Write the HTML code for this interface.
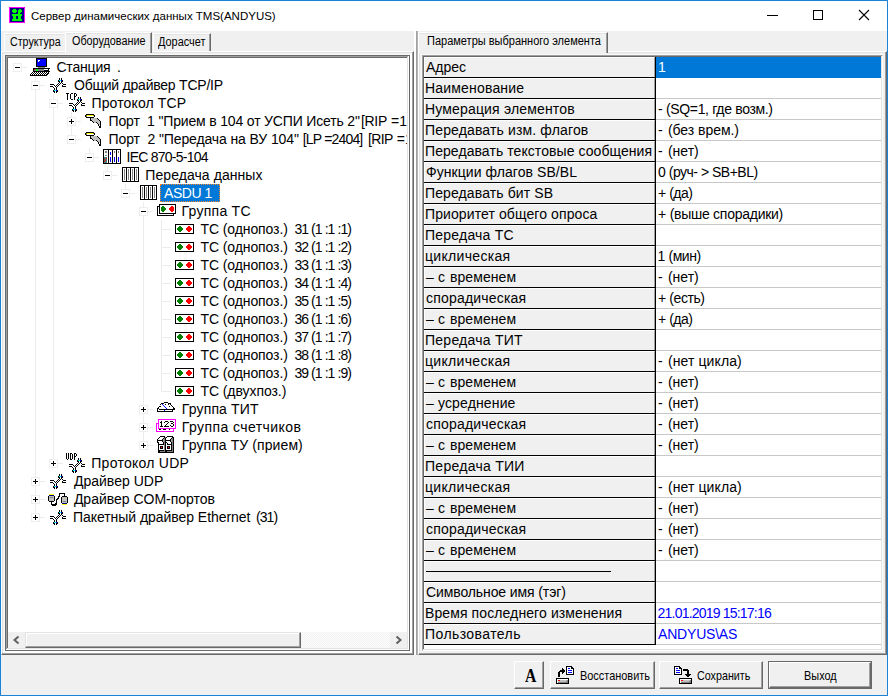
<!DOCTYPE html><html><head><meta charset="utf-8"><style>
html,body{margin:0;padding:0;width:888px;height:696px;overflow:hidden;background:#f0f0f0}
body{position:relative;font-family:"Liberation Sans",sans-serif}
div{box-sizing:border-box}
.t{position:absolute;white-space:pre;font-family:"Liberation Sans",sans-serif}
svg{position:absolute;overflow:visible}
</style></head><body>
<div style="position:absolute;left:0px;top:0px;width:888px;height:696px;background:#f0f0f0;"></div>
<div style="position:absolute;left:1px;top:1px;width:886px;height:30px;background:#ffffff;"></div>
<div style="position:absolute;left:0px;top:0px;width:888px;height:1px;background:#1883d7;"></div>
<div style="position:absolute;left:0px;top:695px;width:888px;height:1px;background:#1883d7;"></div>
<div style="position:absolute;left:0px;top:0px;width:1px;height:696px;background:#1883d7;"></div>
<div style="position:absolute;left:887px;top:0px;width:1px;height:696px;background:#1883d7;"></div>
<svg style="left:9px;top:7px" width="16" height="16" shape-rendering="crispEdges"><rect x="0" y="0" width="16" height="1" fill="#ff00ff"/><rect x="0" y="1" width="1" height="1" fill="#ff00ff"/><rect x="1" y="1" width="14" height="1" fill="#000080"/><rect x="15" y="1" width="1" height="1" fill="#ff00ff"/><rect x="0" y="2" width="1" height="1" fill="#ff00ff"/><rect x="1" y="2" width="3" height="1" fill="#000080"/><rect x="4" y="2" width="3" height="1" fill="#00ff00"/><rect x="7" y="2" width="3" height="1" fill="#000080"/><rect x="10" y="2" width="2" height="1" fill="#00ff00"/><rect x="12" y="2" width="3" height="1" fill="#000080"/><rect x="15" y="2" width="1" height="1" fill="#ff00ff"/><rect x="0" y="3" width="1" height="1" fill="#ff00ff"/><rect x="1" y="3" width="2" height="1" fill="#000080"/><rect x="3" y="3" width="5" height="1" fill="#00ff00"/><rect x="8" y="3" width="1" height="1" fill="#000080"/><rect x="9" y="3" width="4" height="1" fill="#00ff00"/><rect x="13" y="3" width="2" height="1" fill="#000080"/><rect x="15" y="3" width="1" height="1" fill="#ff00ff"/><rect x="0" y="4" width="1" height="1" fill="#ff00ff"/><rect x="1" y="4" width="2" height="1" fill="#000080"/><rect x="3" y="4" width="5" height="1" fill="#00ff00"/><rect x="8" y="4" width="1" height="1" fill="#000080"/><rect x="9" y="4" width="4" height="1" fill="#00ff00"/><rect x="13" y="4" width="2" height="1" fill="#000080"/><rect x="15" y="4" width="1" height="1" fill="#ff00ff"/><rect x="0" y="5" width="1" height="1" fill="#ff00ff"/><rect x="1" y="5" width="3" height="1" fill="#000080"/><rect x="4" y="5" width="3" height="1" fill="#00ff00"/><rect x="7" y="5" width="2" height="1" fill="#000080"/><rect x="9" y="5" width="3" height="1" fill="#00ff00"/><rect x="12" y="5" width="3" height="1" fill="#000080"/><rect x="15" y="5" width="1" height="1" fill="#ff00ff"/><rect x="0" y="6" width="1" height="1" fill="#ff00ff"/><rect x="1" y="6" width="8" height="1" fill="#000080"/><rect x="9" y="6" width="2" height="1" fill="#00ff00"/><rect x="11" y="6" width="4" height="1" fill="#000080"/><rect x="15" y="6" width="1" height="1" fill="#ff00ff"/><rect x="0" y="7" width="1" height="1" fill="#ff00ff"/><rect x="1" y="7" width="2" height="1" fill="#000080"/><rect x="3" y="7" width="10" height="1" fill="#00ff00"/><rect x="13" y="7" width="2" height="1" fill="#000080"/><rect x="15" y="7" width="1" height="1" fill="#ff00ff"/><rect x="0" y="8" width="1" height="1" fill="#ff00ff"/><rect x="1" y="8" width="2" height="1" fill="#000080"/><rect x="3" y="8" width="10" height="1" fill="#00ff00"/><rect x="13" y="8" width="2" height="1" fill="#000080"/><rect x="15" y="8" width="1" height="1" fill="#ff00ff"/><rect x="0" y="9" width="1" height="1" fill="#ff00ff"/><rect x="1" y="9" width="3" height="1" fill="#000080"/><rect x="4" y="9" width="3" height="1" fill="#00ff00"/><rect x="7" y="9" width="2" height="1" fill="#000080"/><rect x="9" y="9" width="3" height="1" fill="#00ff00"/><rect x="12" y="9" width="3" height="1" fill="#000080"/><rect x="15" y="9" width="1" height="1" fill="#ff00ff"/><rect x="0" y="10" width="1" height="1" fill="#ff00ff"/><rect x="1" y="10" width="3" height="1" fill="#000080"/><rect x="4" y="10" width="3" height="1" fill="#00ff00"/><rect x="7" y="10" width="2" height="1" fill="#000080"/><rect x="9" y="10" width="3" height="1" fill="#00ff00"/><rect x="12" y="10" width="3" height="1" fill="#000080"/><rect x="15" y="10" width="1" height="1" fill="#ff00ff"/><rect x="0" y="11" width="1" height="1" fill="#ff00ff"/><rect x="1" y="11" width="3" height="1" fill="#000080"/><rect x="4" y="11" width="3" height="1" fill="#00ff00"/><rect x="7" y="11" width="2" height="1" fill="#000080"/><rect x="9" y="11" width="3" height="1" fill="#00ff00"/><rect x="12" y="11" width="3" height="1" fill="#000080"/><rect x="15" y="11" width="1" height="1" fill="#ff00ff"/><rect x="0" y="12" width="1" height="1" fill="#ff00ff"/><rect x="1" y="12" width="2" height="1" fill="#000080"/><rect x="3" y="12" width="10" height="1" fill="#00ff00"/><rect x="13" y="12" width="2" height="1" fill="#000080"/><rect x="15" y="12" width="1" height="1" fill="#ff00ff"/><rect x="0" y="13" width="1" height="1" fill="#ff00ff"/><rect x="1" y="13" width="2" height="1" fill="#000080"/><rect x="3" y="13" width="10" height="1" fill="#00ff00"/><rect x="13" y="13" width="2" height="1" fill="#000080"/><rect x="15" y="13" width="1" height="1" fill="#ff00ff"/><rect x="0" y="14" width="1" height="1" fill="#ff00ff"/><rect x="1" y="14" width="14" height="1" fill="#000080"/><rect x="15" y="14" width="1" height="1" fill="#ff00ff"/><rect x="0" y="15" width="16" height="1" fill="#ff00ff"/></svg>
<div class="t" style="left:31px;top:7.7px;font-size:11.5px;line-height:16px;letter-spacing:0px;color:#000;">Сервер динамических данных TMS(ANDYUS)</div>
<div style="position:absolute;left:767px;top:15px;width:11px;height:1px;background:#000;"></div>
<div style="position:absolute;left:813px;top:10px;width:10px;height:10px;border:1px solid #000"></div>
<svg style="left:858px;top:9px" width="12" height="12"><path d="M1 1 L11 11 M11 1 L1 11" stroke="#000" stroke-width="1.1"/></svg>
<div style="position:absolute;left:4px;top:33px;width:61px;height:19px;background:#f0f0f0;border-top:1px solid #fff;border-left:1px solid #fff;"></div>
<div style="position:absolute;left:5px;top:34px;width:59px;height:1px;background:#e3e3e3;"></div>
<div class="t" style="left:9.5px;top:35px;font-size:12px;line-height:14px;letter-spacing:0px;color:#000;transform:scaleX(0.89);transform-origin:0 0;">Структура</div>
<div style="position:absolute;left:153px;top:33px;width:58px;height:19px;background:#f0f0f0;border-top:1px solid #fff;border-left:1px solid #fff;border-right:1px solid #696969;"></div>
<div style="position:absolute;left:154px;top:34px;width:55px;height:1px;background:#e3e3e3;"></div>
<div style="position:absolute;left:209px;top:34px;width:1px;height:18px;background:#a0a0a0;"></div>
<div class="t" style="left:157.5px;top:35px;font-size:12px;line-height:14px;letter-spacing:0px;color:#000;transform:scaleX(0.91);transform-origin:0 0;">Дорасчет</div>
<div style="position:absolute;left:1px;top:51px;width:413px;height:604px;background:#f0f0f0;border-top:1px solid #fff;border-left:1px solid #fff;border-right:1px solid #696969;border-bottom:1px solid #696969;"></div>
<div style="position:absolute;left:2px;top:52px;width:411px;height:1px;background:#e3e3e3;"></div>
<div style="position:absolute;left:2px;top:52px;width:1px;height:602px;background:#e3e3e3;"></div>
<div style="position:absolute;left:412px;top:52px;width:1px;height:602px;background:#a0a0a0;"></div>
<div style="position:absolute;left:2px;top:653px;width:411px;height:1px;background:#a0a0a0;"></div>
<div style="position:absolute;left:4px;top:54px;width:406px;height:1px;background:#f8f8f8;"></div>
<div style="position:absolute;left:4px;top:54px;width:1px;height:597px;background:#f8f8f8;"></div>
<div style="position:absolute;left:410px;top:53px;width:2px;height:600px;background:#ffffff;"></div>
<div style="position:absolute;left:3px;top:651px;width:409px;height:2px;background:#ffffff;"></div>
<div style="position:absolute;left:65px;top:32px;width:87px;height:21px;background:#f0f0f0;border-top:1px solid #fff;border-left:1px solid #fff;border-right:1px solid #696969;"></div>
<div style="position:absolute;left:66px;top:33px;width:85px;height:1px;background:#e3e3e3;"></div>
<div style="position:absolute;left:150px;top:33px;width:1px;height:20px;background:#a0a0a0;"></div>
<div class="t" style="left:72px;top:34px;font-size:12px;line-height:14px;letter-spacing:0px;color:#000;transform:scaleX(0.9);transform-origin:0 0;">Оборудование</div>
<div style="position:absolute;left:66px;top:51px;width:84px;height:3px;background:#f0f0f0;"></div>
<div style="position:absolute;left:5px;top:55px;width:405px;height:596px;background:#ffffff;border:1px solid #696969;"></div>
<div style="position:absolute;left:6px;top:56px;width:403px;height:1px;background:#a0a0a0;"></div>
<div style="position:absolute;left:6px;top:56px;width:1px;height:594px;background:#a0a0a0;"></div>
<div style="position:absolute;left:7px;top:57px;width:401px;height:1px;background:#696969;"></div>
<div style="position:absolute;left:7px;top:57px;width:1px;height:592px;background:#696969;"></div>
<div style="position:absolute;left:407px;top:57px;width:1px;height:592px;background:#e3e3e3;"></div>
<div style="position:absolute;left:7px;top:648px;width:401px;height:1px;background:#e3e3e3;"></div>
<div style="position:absolute;left:408px;top:56px;width:1px;height:594px;background:#ffffff;"></div>
<div style="position:absolute;left:6px;top:649px;width:403px;height:1px;background:#ffffff;"></div>
<div style="position:absolute;left:8px;top:58px;width:399px;height:574px;overflow:hidden">
<div style="position:absolute;left:27px;top:18px;width:1px;height:442px;background:#ececec;"></div>
<div style="position:absolute;left:45px;top:36px;width:1px;height:370px;background:#ececec;"></div>
<div style="position:absolute;left:63px;top:54px;width:1px;height:28px;background:#ececec;"></div>
<div style="position:absolute;left:81px;top:90px;width:1px;height:10px;background:#ececec;"></div>
<div style="position:absolute;left:99px;top:108px;width:1px;height:10px;background:#ececec;"></div>
<div style="position:absolute;left:117px;top:126px;width:1px;height:10px;background:#ececec;"></div>
<div style="position:absolute;left:135px;top:144px;width:1px;height:244px;background:#ececec;"></div>
<div style="position:absolute;left:153px;top:162px;width:1px;height:172px;background:#ececec;"></div>
<div style="position:absolute;left:9px;top:9px;width:10px;height:1px;background:#ececec;"></div>
<div style="position:absolute;left:27px;top:27px;width:10px;height:1px;background:#ececec;"></div>
<div style="position:absolute;left:45px;top:45px;width:10px;height:1px;background:#ececec;"></div>
<div style="position:absolute;left:63px;top:63px;width:10px;height:1px;background:#ececec;"></div>
<div style="position:absolute;left:63px;top:81px;width:10px;height:1px;background:#ececec;"></div>
<div style="position:absolute;left:81px;top:99px;width:10px;height:1px;background:#ececec;"></div>
<div style="position:absolute;left:99px;top:117px;width:10px;height:1px;background:#ececec;"></div>
<div style="position:absolute;left:117px;top:135px;width:10px;height:1px;background:#ececec;"></div>
<div style="position:absolute;left:135px;top:153px;width:10px;height:1px;background:#ececec;"></div>
<div style="position:absolute;left:153px;top:171px;width:10px;height:1px;background:#ececec;"></div>
<div style="position:absolute;left:153px;top:189px;width:10px;height:1px;background:#ececec;"></div>
<div style="position:absolute;left:153px;top:207px;width:10px;height:1px;background:#ececec;"></div>
<div style="position:absolute;left:153px;top:225px;width:10px;height:1px;background:#ececec;"></div>
<div style="position:absolute;left:153px;top:243px;width:10px;height:1px;background:#ececec;"></div>
<div style="position:absolute;left:153px;top:261px;width:10px;height:1px;background:#ececec;"></div>
<div style="position:absolute;left:153px;top:279px;width:10px;height:1px;background:#ececec;"></div>
<div style="position:absolute;left:153px;top:297px;width:10px;height:1px;background:#ececec;"></div>
<div style="position:absolute;left:153px;top:315px;width:10px;height:1px;background:#ececec;"></div>
<div style="position:absolute;left:153px;top:333px;width:10px;height:1px;background:#ececec;"></div>
<div style="position:absolute;left:135px;top:351px;width:10px;height:1px;background:#ececec;"></div>
<div style="position:absolute;left:135px;top:369px;width:10px;height:1px;background:#ececec;"></div>
<div style="position:absolute;left:135px;top:387px;width:10px;height:1px;background:#ececec;"></div>
<div style="position:absolute;left:45px;top:405px;width:10px;height:1px;background:#ececec;"></div>
<div style="position:absolute;left:27px;top:423px;width:10px;height:1px;background:#ececec;"></div>
<div style="position:absolute;left:27px;top:441px;width:10px;height:1px;background:#ececec;"></div>
<div style="position:absolute;left:27px;top:459px;width:10px;height:1px;background:#ececec;"></div>
<div style="position:absolute;left:5px;top:5px;width:9px;height:9px;background:#ffffff;border:1px solid #eeeeee;"></div>
<div style="position:absolute;left:7px;top:9px;width:5px;height:1px;background:#000;"></div>
<div style="position:absolute;left:23px;top:23px;width:9px;height:9px;background:#ffffff;border:1px solid #eeeeee;"></div>
<div style="position:absolute;left:25px;top:27px;width:5px;height:1px;background:#000;"></div>
<div style="position:absolute;left:41px;top:41px;width:9px;height:9px;background:#ffffff;border:1px solid #eeeeee;"></div>
<div style="position:absolute;left:43px;top:45px;width:5px;height:1px;background:#000;"></div>
<div style="position:absolute;left:59px;top:59px;width:9px;height:9px;background:#ffffff;border:1px solid #eeeeee;"></div>
<div style="position:absolute;left:61px;top:63px;width:5px;height:1px;background:#000;"></div>
<div style="position:absolute;left:63px;top:61px;width:1px;height:5px;background:#000;"></div>
<div style="position:absolute;left:59px;top:77px;width:9px;height:9px;background:#ffffff;border:1px solid #eeeeee;"></div>
<div style="position:absolute;left:61px;top:81px;width:5px;height:1px;background:#000;"></div>
<div style="position:absolute;left:77px;top:95px;width:9px;height:9px;background:#ffffff;border:1px solid #eeeeee;"></div>
<div style="position:absolute;left:79px;top:99px;width:5px;height:1px;background:#000;"></div>
<div style="position:absolute;left:95px;top:113px;width:9px;height:9px;background:#ffffff;border:1px solid #eeeeee;"></div>
<div style="position:absolute;left:97px;top:117px;width:5px;height:1px;background:#000;"></div>
<div style="position:absolute;left:113px;top:131px;width:9px;height:9px;background:#ffffff;border:1px solid #eeeeee;"></div>
<div style="position:absolute;left:115px;top:135px;width:5px;height:1px;background:#000;"></div>
<div style="position:absolute;left:131px;top:149px;width:9px;height:9px;background:#ffffff;border:1px solid #eeeeee;"></div>
<div style="position:absolute;left:133px;top:153px;width:5px;height:1px;background:#000;"></div>
<div style="position:absolute;left:131px;top:347px;width:9px;height:9px;background:#ffffff;border:1px solid #eeeeee;"></div>
<div style="position:absolute;left:133px;top:351px;width:5px;height:1px;background:#000;"></div>
<div style="position:absolute;left:135px;top:349px;width:1px;height:5px;background:#000;"></div>
<div style="position:absolute;left:131px;top:365px;width:9px;height:9px;background:#ffffff;border:1px solid #eeeeee;"></div>
<div style="position:absolute;left:133px;top:369px;width:5px;height:1px;background:#000;"></div>
<div style="position:absolute;left:135px;top:367px;width:1px;height:5px;background:#000;"></div>
<div style="position:absolute;left:131px;top:383px;width:9px;height:9px;background:#ffffff;border:1px solid #eeeeee;"></div>
<div style="position:absolute;left:133px;top:387px;width:5px;height:1px;background:#000;"></div>
<div style="position:absolute;left:135px;top:385px;width:1px;height:5px;background:#000;"></div>
<div style="position:absolute;left:41px;top:401px;width:9px;height:9px;background:#ffffff;border:1px solid #eeeeee;"></div>
<div style="position:absolute;left:43px;top:405px;width:5px;height:1px;background:#000;"></div>
<div style="position:absolute;left:45px;top:403px;width:1px;height:5px;background:#000;"></div>
<div style="position:absolute;left:23px;top:419px;width:9px;height:9px;background:#ffffff;border:1px solid #eeeeee;"></div>
<div style="position:absolute;left:25px;top:423px;width:5px;height:1px;background:#000;"></div>
<div style="position:absolute;left:27px;top:421px;width:1px;height:5px;background:#000;"></div>
<div style="position:absolute;left:23px;top:437px;width:9px;height:9px;background:#ffffff;border:1px solid #eeeeee;"></div>
<div style="position:absolute;left:25px;top:441px;width:5px;height:1px;background:#000;"></div>
<div style="position:absolute;left:27px;top:439px;width:1px;height:5px;background:#000;"></div>
<div style="position:absolute;left:23px;top:455px;width:9px;height:9px;background:#ffffff;border:1px solid #eeeeee;"></div>
<div style="position:absolute;left:25px;top:459px;width:5px;height:1px;background:#000;"></div>
<div style="position:absolute;left:27px;top:457px;width:1px;height:5px;background:#000;"></div>
<svg style="left:22px;top:0px" width="20" height="18" shape-rendering="crispEdges"><rect x="6" y="0" width="11" height="1" fill="#000000"/><rect x="6" y="1" width="1" height="1" fill="#000000"/><rect x="7" y="1" width="9" height="1" fill="#0000ff"/><rect x="16" y="1" width="1" height="1" fill="#000000"/><rect x="6" y="2" width="1" height="1" fill="#000000"/><rect x="7" y="2" width="1" height="1" fill="#0000ff"/><rect x="8" y="2" width="2" height="1" fill="#ffffff"/><rect x="10" y="2" width="6" height="1" fill="#0000ff"/><rect x="16" y="2" width="1" height="1" fill="#000000"/><rect x="6" y="3" width="1" height="1" fill="#000000"/><rect x="7" y="3" width="1" height="1" fill="#0000ff"/><rect x="8" y="3" width="1" height="1" fill="#ffffff"/><rect x="9" y="3" width="7" height="1" fill="#0000ff"/><rect x="16" y="3" width="1" height="1" fill="#000000"/><rect x="6" y="4" width="1" height="1" fill="#000000"/><rect x="7" y="4" width="9" height="1" fill="#0000ff"/><rect x="16" y="4" width="1" height="1" fill="#000000"/><rect x="6" y="5" width="1" height="1" fill="#000000"/><rect x="7" y="5" width="9" height="1" fill="#0000ff"/><rect x="16" y="5" width="1" height="1" fill="#000000"/><rect x="6" y="6" width="1" height="1" fill="#000000"/><rect x="7" y="6" width="9" height="1" fill="#0000ff"/><rect x="16" y="6" width="1" height="1" fill="#000000"/><rect x="6" y="7" width="1" height="1" fill="#000000"/><rect x="7" y="7" width="9" height="1" fill="#0000ff"/><rect x="16" y="7" width="1" height="1" fill="#000000"/><rect x="6" y="8" width="11" height="1" fill="#000000"/><rect x="8" y="9" width="7" height="1" fill="#808080"/><rect x="3" y="10" width="17" height="1" fill="#000000"/><rect x="3" y="11" width="1" height="1" fill="#000000"/><rect x="4" y="11" width="1" height="1" fill="#ff0000"/><rect x="5" y="11" width="1" height="1" fill="#808080"/><rect x="6" y="11" width="2" height="1" fill="#00ff00"/><rect x="8" y="11" width="6" height="1" fill="#808080"/><rect x="14" y="11" width="4" height="1" fill="#ffffff"/><rect x="18" y="11" width="1" height="1" fill="#000000"/><rect x="3" y="12" width="1" height="1" fill="#000000"/><rect x="4" y="12" width="2" height="1" fill="#808080"/><rect x="6" y="12" width="2" height="1" fill="#00ff00"/><rect x="8" y="12" width="6" height="1" fill="#808080"/><rect x="14" y="12" width="5" height="1" fill="#000000"/><rect x="3" y="13" width="17" height="1" fill="#000000"/><rect x="2" y="14" width="1" height="1" fill="#000000"/><rect x="3" y="14" width="1" height="1" fill="#ffffff"/><rect x="4" y="14" width="1" height="1" fill="#000000"/><rect x="5" y="14" width="1" height="1" fill="#ffffff"/><rect x="6" y="14" width="1" height="1" fill="#000000"/><rect x="7" y="14" width="1" height="1" fill="#ffffff"/><rect x="8" y="14" width="1" height="1" fill="#000000"/><rect x="9" y="14" width="1" height="1" fill="#ffffff"/><rect x="10" y="14" width="1" height="1" fill="#000000"/><rect x="11" y="14" width="1" height="1" fill="#ffffff"/><rect x="12" y="14" width="1" height="1" fill="#000000"/><rect x="13" y="14" width="1" height="1" fill="#ffffff"/><rect x="14" y="14" width="1" height="1" fill="#000000"/><rect x="15" y="14" width="1" height="1" fill="#ffffff"/><rect x="16" y="14" width="1" height="1" fill="#000000"/><rect x="17" y="14" width="1" height="1" fill="#ffffff"/><rect x="18" y="14" width="1" height="1" fill="#000000"/><rect x="1" y="15" width="1" height="1" fill="#000000"/><rect x="2" y="15" width="1" height="1" fill="#ffffff"/><rect x="3" y="15" width="1" height="1" fill="#000000"/><rect x="4" y="15" width="1" height="1" fill="#ffffff"/><rect x="5" y="15" width="1" height="1" fill="#000000"/><rect x="6" y="15" width="1" height="1" fill="#ffffff"/><rect x="7" y="15" width="1" height="1" fill="#000000"/><rect x="8" y="15" width="1" height="1" fill="#ffffff"/><rect x="9" y="15" width="1" height="1" fill="#000000"/><rect x="10" y="15" width="1" height="1" fill="#ffffff"/><rect x="11" y="15" width="1" height="1" fill="#000000"/><rect x="12" y="15" width="1" height="1" fill="#ffffff"/><rect x="13" y="15" width="1" height="1" fill="#000000"/><rect x="14" y="15" width="1" height="1" fill="#ffffff"/><rect x="15" y="15" width="1" height="1" fill="#000000"/><rect x="16" y="15" width="1" height="1" fill="#ffffff"/><rect x="17" y="15" width="2" height="1" fill="#000000"/><rect x="0" y="16" width="1" height="1" fill="#000000"/><rect x="1" y="16" width="1" height="1" fill="#ffffff"/><rect x="2" y="16" width="1" height="1" fill="#000000"/><rect x="3" y="16" width="1" height="1" fill="#ffffff"/><rect x="4" y="16" width="1" height="1" fill="#000000"/><rect x="5" y="16" width="1" height="1" fill="#ffffff"/><rect x="6" y="16" width="1" height="1" fill="#000000"/><rect x="7" y="16" width="1" height="1" fill="#ffffff"/><rect x="8" y="16" width="1" height="1" fill="#000000"/><rect x="9" y="16" width="1" height="1" fill="#ffffff"/><rect x="10" y="16" width="1" height="1" fill="#000000"/><rect x="11" y="16" width="1" height="1" fill="#ffffff"/><rect x="12" y="16" width="1" height="1" fill="#000000"/><rect x="13" y="16" width="1" height="1" fill="#ffffff"/><rect x="14" y="16" width="1" height="1" fill="#000000"/><rect x="15" y="16" width="1" height="1" fill="#ffffff"/><rect x="16" y="16" width="2" height="1" fill="#000000"/><rect x="0" y="17" width="17" height="1" fill="#000000"/></svg>
<div class="t" style="left:48.400000000000006px;top:0px;font-size:14px;line-height:18px;letter-spacing:-0.18px;color:#000;">Станция</div>
<div class="t" style="left:109.0px;top:0px;font-size:14px;line-height:18px;letter-spacing:0.0px;color:#000;">.</div>
<svg style="left:42px;top:20px" width="16" height="15" shape-rendering="crispEdges"><rect x="9" y="0" width="1" height="1" fill="#000000"/><rect x="11" y="0" width="1" height="1" fill="#000000"/><rect x="9" y="1" width="1" height="1" fill="#000000"/><rect x="11" y="1" width="1" height="1" fill="#000000"/><rect x="8" y="2" width="1" height="1" fill="#000000"/><rect x="9" y="2" width="2" height="1" fill="#00ffff"/><rect x="11" y="2" width="1" height="1" fill="#0000ff"/><rect x="12" y="2" width="1" height="1" fill="#000000"/><rect x="8" y="3" width="2" height="1" fill="#000000"/><rect x="11" y="3" width="2" height="1" fill="#000000"/><rect x="9" y="4" width="1" height="1" fill="#000000"/><rect x="11" y="4" width="1" height="1" fill="#000000"/><rect x="8" y="5" width="1" height="1" fill="#000000"/><rect x="10" y="5" width="1" height="1" fill="#000000"/><rect x="12" y="5" width="1" height="1" fill="#000000"/><rect x="0" y="6" width="4" height="1" fill="#000000"/><rect x="7" y="6" width="1" height="1" fill="#000000"/><rect x="9" y="6" width="1" height="1" fill="#000000"/><rect x="13" y="6" width="3" height="1" fill="#000000"/><rect x="4" y="7" width="1" height="1" fill="#000000"/><rect x="6" y="7" width="1" height="1" fill="#000000"/><rect x="8" y="7" width="1" height="1" fill="#000000"/><rect x="12" y="7" width="1" height="1" fill="#000000"/><rect x="0" y="8" width="3" height="1" fill="#000000"/><rect x="5" y="8" width="1" height="1" fill="#000000"/><rect x="7" y="8" width="1" height="1" fill="#000000"/><rect x="12" y="8" width="4" height="1" fill="#000000"/><rect x="3" y="9" width="1" height="1" fill="#000000"/><rect x="6" y="9" width="1" height="1" fill="#000000"/><rect x="4" y="10" width="1" height="1" fill="#000000"/><rect x="6" y="10" width="1" height="1" fill="#000000"/><rect x="4" y="11" width="1" height="1" fill="#000000"/><rect x="6" y="11" width="1" height="1" fill="#000000"/><rect x="3" y="12" width="1" height="1" fill="#000000"/><rect x="4" y="12" width="2" height="1" fill="#00ffff"/><rect x="6" y="12" width="1" height="1" fill="#0000ff"/><rect x="7" y="12" width="1" height="1" fill="#000000"/><rect x="3" y="13" width="2" height="1" fill="#000000"/><rect x="6" y="13" width="2" height="1" fill="#000000"/><rect x="4" y="14" width="1" height="1" fill="#000000"/><rect x="6" y="14" width="1" height="1" fill="#000000"/></svg>
<div class="t" style="left:66.0px;top:18px;font-size:14px;line-height:18px;letter-spacing:-0.227px;color:#000;">Общий драйвер TCP/IP</div>
<svg style="left:58px;top:35px" width="11" height="7" shape-rendering="crispEdges"><rect x="0" y="0" width="3" height="1" fill="#000000"/><rect x="5" y="0" width="2" height="1" fill="#000000"/><rect x="8" y="0" width="2" height="1" fill="#000000"/><rect x="1" y="1" width="1" height="1" fill="#000000"/><rect x="4" y="1" width="1" height="1" fill="#000000"/><rect x="8" y="1" width="1" height="1" fill="#000000"/><rect x="10" y="1" width="1" height="1" fill="#000000"/><rect x="1" y="2" width="1" height="1" fill="#000000"/><rect x="4" y="2" width="1" height="1" fill="#000000"/><rect x="8" y="2" width="1" height="1" fill="#000000"/><rect x="10" y="2" width="1" height="1" fill="#000000"/><rect x="1" y="3" width="1" height="1" fill="#000000"/><rect x="4" y="3" width="1" height="1" fill="#000000"/><rect x="8" y="3" width="2" height="1" fill="#000000"/><rect x="1" y="4" width="1" height="1" fill="#000000"/><rect x="4" y="4" width="1" height="1" fill="#000000"/><rect x="8" y="4" width="1" height="1" fill="#000000"/><rect x="1" y="5" width="1" height="1" fill="#000000"/><rect x="4" y="5" width="1" height="1" fill="#000000"/><rect x="8" y="5" width="1" height="1" fill="#000000"/><rect x="1" y="6" width="1" height="1" fill="#000000"/><rect x="5" y="6" width="2" height="1" fill="#000000"/><rect x="8" y="6" width="1" height="1" fill="#000000"/></svg>
<svg style="left:61px;top:39px" width="16" height="15" shape-rendering="crispEdges"><rect x="9" y="0" width="1" height="1" fill="#000000"/><rect x="11" y="0" width="1" height="1" fill="#000000"/><rect x="9" y="1" width="1" height="1" fill="#000000"/><rect x="11" y="1" width="1" height="1" fill="#000000"/><rect x="8" y="2" width="1" height="1" fill="#000000"/><rect x="9" y="2" width="2" height="1" fill="#00ffff"/><rect x="11" y="2" width="1" height="1" fill="#0000ff"/><rect x="12" y="2" width="1" height="1" fill="#000000"/><rect x="8" y="3" width="2" height="1" fill="#000000"/><rect x="11" y="3" width="2" height="1" fill="#000000"/><rect x="9" y="4" width="1" height="1" fill="#000000"/><rect x="11" y="4" width="1" height="1" fill="#000000"/><rect x="8" y="5" width="1" height="1" fill="#000000"/><rect x="10" y="5" width="1" height="1" fill="#000000"/><rect x="12" y="5" width="1" height="1" fill="#000000"/><rect x="0" y="6" width="4" height="1" fill="#000000"/><rect x="7" y="6" width="1" height="1" fill="#000000"/><rect x="9" y="6" width="1" height="1" fill="#000000"/><rect x="13" y="6" width="3" height="1" fill="#000000"/><rect x="4" y="7" width="1" height="1" fill="#000000"/><rect x="6" y="7" width="1" height="1" fill="#000000"/><rect x="8" y="7" width="1" height="1" fill="#000000"/><rect x="12" y="7" width="1" height="1" fill="#000000"/><rect x="0" y="8" width="3" height="1" fill="#000000"/><rect x="5" y="8" width="1" height="1" fill="#000000"/><rect x="7" y="8" width="1" height="1" fill="#000000"/><rect x="12" y="8" width="4" height="1" fill="#000000"/><rect x="3" y="9" width="1" height="1" fill="#000000"/><rect x="6" y="9" width="1" height="1" fill="#000000"/><rect x="4" y="10" width="1" height="1" fill="#000000"/><rect x="6" y="10" width="1" height="1" fill="#000000"/><rect x="4" y="11" width="1" height="1" fill="#000000"/><rect x="6" y="11" width="1" height="1" fill="#000000"/><rect x="3" y="12" width="1" height="1" fill="#000000"/><rect x="4" y="12" width="2" height="1" fill="#00ffff"/><rect x="6" y="12" width="1" height="1" fill="#0000ff"/><rect x="7" y="12" width="1" height="1" fill="#000000"/><rect x="3" y="13" width="2" height="1" fill="#000000"/><rect x="6" y="13" width="2" height="1" fill="#000000"/><rect x="4" y="14" width="1" height="1" fill="#000000"/><rect x="6" y="14" width="1" height="1" fill="#000000"/></svg>
<div class="t" style="left:83.5px;top:36px;font-size:14px;line-height:18px;letter-spacing:0.123px;color:#000;">Протокол TCP</div>
<svg style="left:75px;top:54px" width="18" height="16" shape-rendering="crispEdges"><rect x="3" y="2" width="8" height="1" fill="#000000"/><rect x="2" y="3" width="1" height="1" fill="#000000"/><rect x="3" y="3" width="1" height="1" fill="#808000"/><rect x="4" y="3" width="6" height="1" fill="#ffff00"/><rect x="10" y="3" width="1" height="1" fill="#808000"/><rect x="11" y="3" width="1" height="1" fill="#000000"/><rect x="2" y="4" width="1" height="1" fill="#000000"/><rect x="3" y="4" width="1" height="1" fill="#808000"/><rect x="4" y="4" width="7" height="1" fill="#ffffff"/><rect x="11" y="4" width="1" height="1" fill="#000000"/><rect x="3" y="5" width="8" height="1" fill="#000000"/><rect x="7" y="6" width="1" height="1" fill="#000000"/><rect x="8" y="6" width="6" height="1" fill="#c0c0c0"/><rect x="14" y="6" width="1" height="1" fill="#000000"/><rect x="7" y="7" width="1" height="1" fill="#000000"/><rect x="8" y="7" width="7" height="1" fill="#c0c0c0"/><rect x="15" y="7" width="1" height="1" fill="#000000"/><rect x="7" y="8" width="2" height="1" fill="#000000"/><rect x="9" y="8" width="7" height="1" fill="#c0c0c0"/><rect x="16" y="8" width="1" height="1" fill="#000000"/><rect x="9" y="9" width="1" height="1" fill="#000000"/><rect x="10" y="9" width="7" height="1" fill="#c0c0c0"/><rect x="17" y="9" width="1" height="1" fill="#000000"/><rect x="10" y="10" width="1" height="1" fill="#000000"/><rect x="11" y="10" width="2" height="1" fill="#c0c0c0"/><rect x="13" y="10" width="1" height="1" fill="#000000"/><rect x="14" y="10" width="3" height="1" fill="#c0c0c0"/><rect x="17" y="10" width="1" height="1" fill="#000000"/><rect x="14" y="11" width="1" height="1" fill="#000000"/><rect x="15" y="11" width="2" height="1" fill="#c0c0c0"/><rect x="17" y="11" width="1" height="1" fill="#000000"/><rect x="15" y="12" width="1" height="1" fill="#000000"/><rect x="16" y="12" width="1" height="1" fill="#c0c0c0"/><rect x="17" y="12" width="1" height="1" fill="#000000"/><rect x="15" y="13" width="1" height="1" fill="#000000"/><rect x="16" y="13" width="1" height="1" fill="#ffffff"/><rect x="17" y="13" width="1" height="1" fill="#000000"/><rect x="16" y="14" width="2" height="1" fill="#000000"/><rect x="16" y="15" width="2" height="1" fill="#000000"/></svg>
<div class="t" style="left:100.6px;top:54px;font-size:14px;line-height:18px;letter-spacing:-0.166px;color:#000;">Порт  1 &quot;Прием в 104 от УСПИ Исеть 2&quot;</div>
<div class="t" style="left:353.0px;top:54px;font-size:14px;line-height:18px;letter-spacing:-0.333px;color:#000;">[RIP</div>
<div class="t" style="left:383.0px;top:54px;font-size:14px;line-height:18px;letter-spacing:0.0px;color:#000;">=192.168.1.1]</div>
<svg style="left:75px;top:72px" width="18" height="16" shape-rendering="crispEdges"><rect x="3" y="2" width="8" height="1" fill="#000000"/><rect x="2" y="3" width="1" height="1" fill="#000000"/><rect x="3" y="3" width="1" height="1" fill="#808000"/><rect x="4" y="3" width="6" height="1" fill="#ffff00"/><rect x="10" y="3" width="1" height="1" fill="#808000"/><rect x="11" y="3" width="1" height="1" fill="#000000"/><rect x="2" y="4" width="1" height="1" fill="#000000"/><rect x="3" y="4" width="1" height="1" fill="#808000"/><rect x="4" y="4" width="7" height="1" fill="#ffffff"/><rect x="11" y="4" width="1" height="1" fill="#000000"/><rect x="3" y="5" width="8" height="1" fill="#000000"/><rect x="7" y="6" width="1" height="1" fill="#000000"/><rect x="8" y="6" width="6" height="1" fill="#c0c0c0"/><rect x="14" y="6" width="1" height="1" fill="#000000"/><rect x="7" y="7" width="1" height="1" fill="#000000"/><rect x="8" y="7" width="7" height="1" fill="#c0c0c0"/><rect x="15" y="7" width="1" height="1" fill="#000000"/><rect x="7" y="8" width="2" height="1" fill="#000000"/><rect x="9" y="8" width="7" height="1" fill="#c0c0c0"/><rect x="16" y="8" width="1" height="1" fill="#000000"/><rect x="9" y="9" width="1" height="1" fill="#000000"/><rect x="10" y="9" width="7" height="1" fill="#c0c0c0"/><rect x="17" y="9" width="1" height="1" fill="#000000"/><rect x="10" y="10" width="1" height="1" fill="#000000"/><rect x="11" y="10" width="2" height="1" fill="#c0c0c0"/><rect x="13" y="10" width="1" height="1" fill="#000000"/><rect x="14" y="10" width="3" height="1" fill="#c0c0c0"/><rect x="17" y="10" width="1" height="1" fill="#000000"/><rect x="14" y="11" width="1" height="1" fill="#000000"/><rect x="15" y="11" width="2" height="1" fill="#c0c0c0"/><rect x="17" y="11" width="1" height="1" fill="#000000"/><rect x="15" y="12" width="1" height="1" fill="#000000"/><rect x="16" y="12" width="1" height="1" fill="#c0c0c0"/><rect x="17" y="12" width="1" height="1" fill="#000000"/><rect x="15" y="13" width="1" height="1" fill="#000000"/><rect x="16" y="13" width="1" height="1" fill="#ffffff"/><rect x="17" y="13" width="1" height="1" fill="#000000"/><rect x="16" y="14" width="2" height="1" fill="#000000"/><rect x="16" y="15" width="2" height="1" fill="#000000"/></svg>
<div class="t" style="left:100.6px;top:72px;font-size:14px;line-height:18px;letter-spacing:-0.111px;color:#000;">Порт  2 &quot;Передача на ВУ 104&quot;</div>
<div class="t" style="left:294.79999999999995px;top:72px;font-size:14px;line-height:18px;letter-spacing:-0.822px;color:#000;">[LP =2404]</div>
<div class="t" style="left:359.9px;top:72px;font-size:14px;line-height:18px;letter-spacing:-0.568px;color:#000;">[RIP</div>
<div class="t" style="left:388.79999999999995px;top:72px;font-size:14px;line-height:18px;letter-spacing:0.0px;color:#000;">=192.168.1.2]</div>
<svg style="left:95px;top:91px" width="18" height="15" shape-rendering="crispEdges"><rect x="0" y="0" width="18" height="1" fill="#000000"/><rect x="0" y="1" width="1" height="1" fill="#000000"/><rect x="1" y="1" width="4" height="1" fill="#ffffff"/><rect x="5" y="1" width="1" height="1" fill="#000000"/><rect x="6" y="1" width="3" height="1" fill="#ffffff"/><rect x="9" y="1" width="1" height="1" fill="#000000"/><rect x="10" y="1" width="3" height="1" fill="#ffffff"/><rect x="13" y="1" width="1" height="1" fill="#000000"/><rect x="14" y="1" width="3" height="1" fill="#ffffff"/><rect x="17" y="1" width="1" height="1" fill="#000000"/><rect x="0" y="2" width="1" height="1" fill="#000000"/><rect x="1" y="2" width="1" height="1" fill="#ffffff"/><rect x="2" y="2" width="2" height="1" fill="#808080"/><rect x="4" y="2" width="1" height="1" fill="#ffffff"/><rect x="5" y="2" width="1" height="1" fill="#000000"/><rect x="6" y="2" width="3" height="1" fill="#ffffff"/><rect x="9" y="2" width="1" height="1" fill="#000000"/><rect x="10" y="2" width="1" height="1" fill="#ffffff"/><rect x="11" y="2" width="1" height="1" fill="#808080"/><rect x="12" y="2" width="1" height="1" fill="#ffffff"/><rect x="13" y="2" width="1" height="1" fill="#000000"/><rect x="14" y="2" width="1" height="1" fill="#ffffff"/><rect x="15" y="2" width="1" height="1" fill="#808080"/><rect x="16" y="2" width="1" height="1" fill="#ffffff"/><rect x="17" y="2" width="1" height="1" fill="#000000"/><rect x="0" y="3" width="1" height="1" fill="#000000"/><rect x="1" y="3" width="1" height="1" fill="#ffffff"/><rect x="2" y="3" width="2" height="1" fill="#808080"/><rect x="4" y="3" width="1" height="1" fill="#ffffff"/><rect x="5" y="3" width="1" height="1" fill="#000000"/><rect x="6" y="3" width="1" height="1" fill="#ffffff"/><rect x="7" y="3" width="1" height="1" fill="#0000ff"/><rect x="8" y="3" width="1" height="1" fill="#ffffff"/><rect x="9" y="3" width="1" height="1" fill="#000000"/><rect x="10" y="3" width="1" height="1" fill="#ffffff"/><rect x="11" y="3" width="1" height="1" fill="#808080"/><rect x="12" y="3" width="1" height="1" fill="#ffffff"/><rect x="13" y="3" width="1" height="1" fill="#000000"/><rect x="14" y="3" width="1" height="1" fill="#ffffff"/><rect x="15" y="3" width="1" height="1" fill="#808080"/><rect x="16" y="3" width="1" height="1" fill="#ffffff"/><rect x="17" y="3" width="1" height="1" fill="#000000"/><rect x="0" y="4" width="1" height="1" fill="#000000"/><rect x="1" y="4" width="4" height="1" fill="#ffffff"/><rect x="5" y="4" width="1" height="1" fill="#000000"/><rect x="6" y="4" width="1" height="1" fill="#ffffff"/><rect x="7" y="4" width="1" height="1" fill="#0000ff"/><rect x="8" y="4" width="1" height="1" fill="#ffffff"/><rect x="9" y="4" width="1" height="1" fill="#000000"/><rect x="10" y="4" width="3" height="1" fill="#ffffff"/><rect x="13" y="4" width="1" height="1" fill="#000000"/><rect x="14" y="4" width="3" height="1" fill="#ffffff"/><rect x="17" y="4" width="1" height="1" fill="#000000"/><rect x="0" y="5" width="1" height="1" fill="#000000"/><rect x="1" y="5" width="4" height="1" fill="#ffffff"/><rect x="5" y="5" width="1" height="1" fill="#000000"/><rect x="6" y="5" width="1" height="1" fill="#ffffff"/><rect x="7" y="5" width="1" height="1" fill="#0000ff"/><rect x="8" y="5" width="1" height="1" fill="#ffffff"/><rect x="9" y="5" width="1" height="1" fill="#000000"/><rect x="10" y="5" width="3" height="1" fill="#ffffff"/><rect x="13" y="5" width="1" height="1" fill="#000000"/><rect x="14" y="5" width="3" height="1" fill="#ffffff"/><rect x="17" y="5" width="1" height="1" fill="#000000"/><rect x="0" y="6" width="1" height="1" fill="#000000"/><rect x="1" y="6" width="1" height="1" fill="#ffffff"/><rect x="2" y="6" width="2" height="1" fill="#808080"/><rect x="4" y="6" width="1" height="1" fill="#ffffff"/><rect x="5" y="6" width="1" height="1" fill="#000000"/><rect x="6" y="6" width="3" height="1" fill="#ffffff"/><rect x="9" y="6" width="1" height="1" fill="#000000"/><rect x="10" y="6" width="3" height="1" fill="#ffffff"/><rect x="13" y="6" width="1" height="1" fill="#000000"/><rect x="14" y="6" width="3" height="1" fill="#ffffff"/><rect x="17" y="6" width="1" height="1" fill="#000000"/><rect x="0" y="7" width="1" height="1" fill="#000000"/><rect x="1" y="7" width="4" height="1" fill="#ffffff"/><rect x="5" y="7" width="1" height="1" fill="#000000"/><rect x="6" y="7" width="3" height="1" fill="#ffffff"/><rect x="9" y="7" width="1" height="1" fill="#000000"/><rect x="10" y="7" width="3" height="1" fill="#ffffff"/><rect x="13" y="7" width="1" height="1" fill="#000000"/><rect x="14" y="7" width="3" height="1" fill="#ffffff"/><rect x="17" y="7" width="1" height="1" fill="#000000"/><rect x="0" y="8" width="1" height="1" fill="#000000"/><rect x="1" y="8" width="3" height="1" fill="#408080"/><rect x="4" y="8" width="1" height="1" fill="#ffffff"/><rect x="5" y="8" width="1" height="1" fill="#000000"/><rect x="6" y="8" width="1" height="1" fill="#ffffff"/><rect x="7" y="8" width="1" height="1" fill="#0000ff"/><rect x="8" y="8" width="1" height="1" fill="#ffffff"/><rect x="9" y="8" width="1" height="1" fill="#000000"/><rect x="10" y="8" width="1" height="1" fill="#ffffff"/><rect x="11" y="8" width="1" height="1" fill="#0000ff"/><rect x="12" y="8" width="1" height="1" fill="#ffffff"/><rect x="13" y="8" width="1" height="1" fill="#000000"/><rect x="14" y="8" width="1" height="1" fill="#ffffff"/><rect x="15" y="8" width="1" height="1" fill="#0000ff"/><rect x="16" y="8" width="1" height="1" fill="#ffffff"/><rect x="17" y="8" width="1" height="1" fill="#000000"/><rect x="0" y="9" width="1" height="1" fill="#000000"/><rect x="1" y="9" width="2" height="1" fill="#408080"/><rect x="3" y="9" width="1" height="1" fill="#ff0000"/><rect x="4" y="9" width="1" height="1" fill="#ffffff"/><rect x="5" y="9" width="1" height="1" fill="#000000"/><rect x="6" y="9" width="1" height="1" fill="#ffffff"/><rect x="7" y="9" width="1" height="1" fill="#0000ff"/><rect x="8" y="9" width="1" height="1" fill="#ffffff"/><rect x="9" y="9" width="1" height="1" fill="#000000"/><rect x="10" y="9" width="1" height="1" fill="#ffffff"/><rect x="11" y="9" width="1" height="1" fill="#0000ff"/><rect x="12" y="9" width="1" height="1" fill="#ffffff"/><rect x="13" y="9" width="1" height="1" fill="#000000"/><rect x="14" y="9" width="1" height="1" fill="#ffffff"/><rect x="15" y="9" width="1" height="1" fill="#0000ff"/><rect x="16" y="9" width="1" height="1" fill="#ffffff"/><rect x="17" y="9" width="1" height="1" fill="#000000"/><rect x="0" y="10" width="1" height="1" fill="#000000"/><rect x="1" y="10" width="1" height="1" fill="#ff0000"/><rect x="2" y="10" width="2" height="1" fill="#408080"/><rect x="4" y="10" width="1" height="1" fill="#ffffff"/><rect x="5" y="10" width="1" height="1" fill="#000000"/><rect x="6" y="10" width="1" height="1" fill="#ffffff"/><rect x="7" y="10" width="1" height="1" fill="#0000ff"/><rect x="8" y="10" width="1" height="1" fill="#ffffff"/><rect x="9" y="10" width="1" height="1" fill="#000000"/><rect x="10" y="10" width="1" height="1" fill="#ffffff"/><rect x="11" y="10" width="1" height="1" fill="#0000ff"/><rect x="12" y="10" width="1" height="1" fill="#ffffff"/><rect x="13" y="10" width="1" height="1" fill="#000000"/><rect x="14" y="10" width="1" height="1" fill="#ffffff"/><rect x="15" y="10" width="1" height="1" fill="#0000ff"/><rect x="16" y="10" width="1" height="1" fill="#ffffff"/><rect x="17" y="10" width="1" height="1" fill="#000000"/><rect x="0" y="11" width="1" height="1" fill="#000000"/><rect x="1" y="11" width="1" height="1" fill="#408080"/><rect x="2" y="11" width="1" height="1" fill="#ff0000"/><rect x="3" y="11" width="1" height="1" fill="#408080"/><rect x="4" y="11" width="1" height="1" fill="#ffffff"/><rect x="5" y="11" width="1" height="1" fill="#000000"/><rect x="6" y="11" width="1" height="1" fill="#ffffff"/><rect x="7" y="11" width="1" height="1" fill="#0000ff"/><rect x="8" y="11" width="1" height="1" fill="#ffffff"/><rect x="9" y="11" width="1" height="1" fill="#000000"/><rect x="10" y="11" width="1" height="1" fill="#ffffff"/><rect x="11" y="11" width="1" height="1" fill="#0000ff"/><rect x="12" y="11" width="1" height="1" fill="#ffffff"/><rect x="13" y="11" width="1" height="1" fill="#000000"/><rect x="14" y="11" width="1" height="1" fill="#ffffff"/><rect x="15" y="11" width="1" height="1" fill="#0000ff"/><rect x="16" y="11" width="1" height="1" fill="#ffffff"/><rect x="17" y="11" width="1" height="1" fill="#000000"/><rect x="0" y="12" width="1" height="1" fill="#000000"/><rect x="1" y="12" width="1" height="1" fill="#ff0000"/><rect x="2" y="12" width="2" height="1" fill="#408080"/><rect x="4" y="12" width="1" height="1" fill="#ffffff"/><rect x="5" y="12" width="1" height="1" fill="#000000"/><rect x="6" y="12" width="1" height="1" fill="#ffffff"/><rect x="7" y="12" width="1" height="1" fill="#0000ff"/><rect x="8" y="12" width="1" height="1" fill="#ffffff"/><rect x="9" y="12" width="1" height="1" fill="#000000"/><rect x="10" y="12" width="1" height="1" fill="#ffffff"/><rect x="11" y="12" width="1" height="1" fill="#0000ff"/><rect x="12" y="12" width="1" height="1" fill="#ffffff"/><rect x="13" y="12" width="1" height="1" fill="#000000"/><rect x="14" y="12" width="1" height="1" fill="#ffffff"/><rect x="15" y="12" width="1" height="1" fill="#0000ff"/><rect x="16" y="12" width="1" height="1" fill="#ffffff"/><rect x="17" y="12" width="1" height="1" fill="#000000"/><rect x="0" y="13" width="1" height="1" fill="#000000"/><rect x="1" y="13" width="3" height="1" fill="#408080"/><rect x="4" y="13" width="1" height="1" fill="#ffffff"/><rect x="5" y="13" width="1" height="1" fill="#000000"/><rect x="6" y="13" width="3" height="1" fill="#ffffff"/><rect x="9" y="13" width="1" height="1" fill="#000000"/><rect x="10" y="13" width="3" height="1" fill="#ffffff"/><rect x="13" y="13" width="1" height="1" fill="#000000"/><rect x="14" y="13" width="3" height="1" fill="#ffffff"/><rect x="17" y="13" width="1" height="1" fill="#000000"/><rect x="0" y="14" width="18" height="1" fill="#000000"/></svg>
<div class="t" style="left:118.6px;top:90px;font-size:14px;line-height:18px;letter-spacing:-0.762px;color:#000;">IEC 870-5-104</div>
<svg style="left:114px;top:109px" width="17" height="15" shape-rendering="crispEdges"><rect x="0" y="0" width="17" height="1" fill="#000000"/><rect x="0" y="1" width="1" height="1" fill="#000000"/><rect x="1" y="1" width="3" height="1" fill="#ffffff"/><rect x="4" y="1" width="1" height="1" fill="#000000"/><rect x="5" y="1" width="3" height="1" fill="#ffffff"/><rect x="8" y="1" width="1" height="1" fill="#000000"/><rect x="9" y="1" width="3" height="1" fill="#ffffff"/><rect x="12" y="1" width="1" height="1" fill="#000000"/><rect x="13" y="1" width="3" height="1" fill="#ffffff"/><rect x="16" y="1" width="1" height="1" fill="#000000"/><rect x="0" y="2" width="1" height="1" fill="#000000"/><rect x="1" y="2" width="1" height="1" fill="#ffffff"/><rect x="2" y="2" width="1" height="1" fill="#808080"/><rect x="3" y="2" width="1" height="1" fill="#ffffff"/><rect x="4" y="2" width="1" height="1" fill="#000000"/><rect x="5" y="2" width="1" height="1" fill="#ffffff"/><rect x="6" y="2" width="1" height="1" fill="#808080"/><rect x="7" y="2" width="1" height="1" fill="#ffffff"/><rect x="8" y="2" width="1" height="1" fill="#000000"/><rect x="9" y="2" width="1" height="1" fill="#ffffff"/><rect x="10" y="2" width="1" height="1" fill="#808080"/><rect x="11" y="2" width="1" height="1" fill="#ffffff"/><rect x="12" y="2" width="1" height="1" fill="#000000"/><rect x="13" y="2" width="1" height="1" fill="#ffffff"/><rect x="14" y="2" width="1" height="1" fill="#808080"/><rect x="15" y="2" width="1" height="1" fill="#ffffff"/><rect x="16" y="2" width="1" height="1" fill="#000000"/><rect x="0" y="3" width="1" height="1" fill="#000000"/><rect x="1" y="3" width="1" height="1" fill="#ffffff"/><rect x="2" y="3" width="1" height="1" fill="#808080"/><rect x="3" y="3" width="1" height="1" fill="#ffffff"/><rect x="4" y="3" width="1" height="1" fill="#000000"/><rect x="5" y="3" width="1" height="1" fill="#ffffff"/><rect x="6" y="3" width="1" height="1" fill="#808080"/><rect x="7" y="3" width="1" height="1" fill="#ffffff"/><rect x="8" y="3" width="1" height="1" fill="#000000"/><rect x="9" y="3" width="1" height="1" fill="#ffffff"/><rect x="10" y="3" width="1" height="1" fill="#808080"/><rect x="11" y="3" width="1" height="1" fill="#ffffff"/><rect x="12" y="3" width="1" height="1" fill="#000000"/><rect x="13" y="3" width="1" height="1" fill="#ffffff"/><rect x="14" y="3" width="1" height="1" fill="#808080"/><rect x="15" y="3" width="1" height="1" fill="#ffffff"/><rect x="16" y="3" width="1" height="1" fill="#000000"/><rect x="0" y="4" width="1" height="1" fill="#000000"/><rect x="1" y="4" width="1" height="1" fill="#ffffff"/><rect x="2" y="4" width="1" height="1" fill="#808080"/><rect x="3" y="4" width="1" height="1" fill="#ffffff"/><rect x="4" y="4" width="1" height="1" fill="#000000"/><rect x="5" y="4" width="1" height="1" fill="#ffffff"/><rect x="6" y="4" width="1" height="1" fill="#808080"/><rect x="7" y="4" width="1" height="1" fill="#ffffff"/><rect x="8" y="4" width="1" height="1" fill="#000000"/><rect x="9" y="4" width="1" height="1" fill="#ffffff"/><rect x="10" y="4" width="1" height="1" fill="#808080"/><rect x="11" y="4" width="1" height="1" fill="#ffffff"/><rect x="12" y="4" width="1" height="1" fill="#000000"/><rect x="13" y="4" width="1" height="1" fill="#ffffff"/><rect x="14" y="4" width="1" height="1" fill="#808080"/><rect x="15" y="4" width="1" height="1" fill="#ffffff"/><rect x="16" y="4" width="1" height="1" fill="#000000"/><rect x="0" y="5" width="1" height="1" fill="#000000"/><rect x="1" y="5" width="1" height="1" fill="#ffffff"/><rect x="2" y="5" width="1" height="1" fill="#808080"/><rect x="3" y="5" width="1" height="1" fill="#ffffff"/><rect x="4" y="5" width="1" height="1" fill="#000000"/><rect x="5" y="5" width="1" height="1" fill="#ffffff"/><rect x="6" y="5" width="1" height="1" fill="#808080"/><rect x="7" y="5" width="1" height="1" fill="#ffffff"/><rect x="8" y="5" width="1" height="1" fill="#000000"/><rect x="9" y="5" width="1" height="1" fill="#ffffff"/><rect x="10" y="5" width="1" height="1" fill="#808080"/><rect x="11" y="5" width="1" height="1" fill="#ffffff"/><rect x="12" y="5" width="1" height="1" fill="#000000"/><rect x="13" y="5" width="1" height="1" fill="#ffffff"/><rect x="14" y="5" width="1" height="1" fill="#808080"/><rect x="15" y="5" width="1" height="1" fill="#ffffff"/><rect x="16" y="5" width="1" height="1" fill="#000000"/><rect x="0" y="6" width="1" height="1" fill="#000000"/><rect x="1" y="6" width="1" height="1" fill="#ffffff"/><rect x="2" y="6" width="1" height="1" fill="#808080"/><rect x="3" y="6" width="1" height="1" fill="#ffffff"/><rect x="4" y="6" width="1" height="1" fill="#000000"/><rect x="5" y="6" width="1" height="1" fill="#ffffff"/><rect x="6" y="6" width="1" height="1" fill="#808080"/><rect x="7" y="6" width="1" height="1" fill="#ffffff"/><rect x="8" y="6" width="1" height="1" fill="#000000"/><rect x="9" y="6" width="1" height="1" fill="#ffffff"/><rect x="10" y="6" width="1" height="1" fill="#808080"/><rect x="11" y="6" width="1" height="1" fill="#ffffff"/><rect x="12" y="6" width="1" height="1" fill="#000000"/><rect x="13" y="6" width="1" height="1" fill="#ffffff"/><rect x="14" y="6" width="1" height="1" fill="#808080"/><rect x="15" y="6" width="1" height="1" fill="#ffffff"/><rect x="16" y="6" width="1" height="1" fill="#000000"/><rect x="0" y="7" width="1" height="1" fill="#000000"/><rect x="1" y="7" width="1" height="1" fill="#ffffff"/><rect x="2" y="7" width="1" height="1" fill="#808080"/><rect x="3" y="7" width="1" height="1" fill="#ffffff"/><rect x="4" y="7" width="1" height="1" fill="#000000"/><rect x="5" y="7" width="1" height="1" fill="#ffffff"/><rect x="6" y="7" width="1" height="1" fill="#808080"/><rect x="7" y="7" width="1" height="1" fill="#ffffff"/><rect x="8" y="7" width="1" height="1" fill="#000000"/><rect x="9" y="7" width="1" height="1" fill="#ffffff"/><rect x="10" y="7" width="1" height="1" fill="#808080"/><rect x="11" y="7" width="1" height="1" fill="#ffffff"/><rect x="12" y="7" width="1" height="1" fill="#000000"/><rect x="13" y="7" width="1" height="1" fill="#ffffff"/><rect x="14" y="7" width="1" height="1" fill="#808080"/><rect x="15" y="7" width="1" height="1" fill="#ffffff"/><rect x="16" y="7" width="1" height="1" fill="#000000"/><rect x="0" y="8" width="1" height="1" fill="#000000"/><rect x="1" y="8" width="1" height="1" fill="#ffffff"/><rect x="2" y="8" width="1" height="1" fill="#808080"/><rect x="3" y="8" width="1" height="1" fill="#ffffff"/><rect x="4" y="8" width="1" height="1" fill="#000000"/><rect x="5" y="8" width="1" height="1" fill="#ffffff"/><rect x="6" y="8" width="1" height="1" fill="#808080"/><rect x="7" y="8" width="1" height="1" fill="#ffffff"/><rect x="8" y="8" width="1" height="1" fill="#000000"/><rect x="9" y="8" width="1" height="1" fill="#ffffff"/><rect x="10" y="8" width="1" height="1" fill="#808080"/><rect x="11" y="8" width="1" height="1" fill="#ffffff"/><rect x="12" y="8" width="1" height="1" fill="#000000"/><rect x="13" y="8" width="1" height="1" fill="#ffffff"/><rect x="14" y="8" width="1" height="1" fill="#808080"/><rect x="15" y="8" width="1" height="1" fill="#ffffff"/><rect x="16" y="8" width="1" height="1" fill="#000000"/><rect x="0" y="9" width="1" height="1" fill="#000000"/><rect x="1" y="9" width="1" height="1" fill="#ffffff"/><rect x="2" y="9" width="1" height="1" fill="#808080"/><rect x="3" y="9" width="1" height="1" fill="#ffffff"/><rect x="4" y="9" width="1" height="1" fill="#000000"/><rect x="5" y="9" width="1" height="1" fill="#ffffff"/><rect x="6" y="9" width="1" height="1" fill="#808080"/><rect x="7" y="9" width="1" height="1" fill="#ffffff"/><rect x="8" y="9" width="1" height="1" fill="#000000"/><rect x="9" y="9" width="1" height="1" fill="#ffffff"/><rect x="10" y="9" width="1" height="1" fill="#808080"/><rect x="11" y="9" width="1" height="1" fill="#ffffff"/><rect x="12" y="9" width="1" height="1" fill="#000000"/><rect x="13" y="9" width="1" height="1" fill="#ffffff"/><rect x="14" y="9" width="1" height="1" fill="#808080"/><rect x="15" y="9" width="1" height="1" fill="#ffffff"/><rect x="16" y="9" width="1" height="1" fill="#000000"/><rect x="0" y="10" width="1" height="1" fill="#000000"/><rect x="1" y="10" width="1" height="1" fill="#ffffff"/><rect x="2" y="10" width="1" height="1" fill="#808080"/><rect x="3" y="10" width="1" height="1" fill="#ffffff"/><rect x="4" y="10" width="1" height="1" fill="#000000"/><rect x="5" y="10" width="1" height="1" fill="#ffffff"/><rect x="6" y="10" width="1" height="1" fill="#808080"/><rect x="7" y="10" width="1" height="1" fill="#ffffff"/><rect x="8" y="10" width="1" height="1" fill="#000000"/><rect x="9" y="10" width="1" height="1" fill="#ffffff"/><rect x="10" y="10" width="1" height="1" fill="#808080"/><rect x="11" y="10" width="1" height="1" fill="#ffffff"/><rect x="12" y="10" width="1" height="1" fill="#000000"/><rect x="13" y="10" width="1" height="1" fill="#ffffff"/><rect x="14" y="10" width="1" height="1" fill="#808080"/><rect x="15" y="10" width="1" height="1" fill="#ffffff"/><rect x="16" y="10" width="1" height="1" fill="#000000"/><rect x="0" y="11" width="1" height="1" fill="#000000"/><rect x="1" y="11" width="1" height="1" fill="#ffffff"/><rect x="2" y="11" width="1" height="1" fill="#808080"/><rect x="3" y="11" width="1" height="1" fill="#ffffff"/><rect x="4" y="11" width="1" height="1" fill="#000000"/><rect x="5" y="11" width="1" height="1" fill="#ffffff"/><rect x="6" y="11" width="1" height="1" fill="#808080"/><rect x="7" y="11" width="1" height="1" fill="#ffffff"/><rect x="8" y="11" width="1" height="1" fill="#000000"/><rect x="9" y="11" width="1" height="1" fill="#ffffff"/><rect x="10" y="11" width="1" height="1" fill="#808080"/><rect x="11" y="11" width="1" height="1" fill="#ffffff"/><rect x="12" y="11" width="1" height="1" fill="#000000"/><rect x="13" y="11" width="1" height="1" fill="#ffffff"/><rect x="14" y="11" width="1" height="1" fill="#808080"/><rect x="15" y="11" width="1" height="1" fill="#ffffff"/><rect x="16" y="11" width="1" height="1" fill="#000000"/><rect x="0" y="12" width="1" height="1" fill="#000000"/><rect x="1" y="12" width="1" height="1" fill="#ffffff"/><rect x="2" y="12" width="1" height="1" fill="#808080"/><rect x="3" y="12" width="1" height="1" fill="#ffffff"/><rect x="4" y="12" width="1" height="1" fill="#000000"/><rect x="5" y="12" width="1" height="1" fill="#ffffff"/><rect x="6" y="12" width="1" height="1" fill="#808080"/><rect x="7" y="12" width="1" height="1" fill="#ffffff"/><rect x="8" y="12" width="1" height="1" fill="#000000"/><rect x="9" y="12" width="1" height="1" fill="#ffffff"/><rect x="10" y="12" width="1" height="1" fill="#808080"/><rect x="11" y="12" width="1" height="1" fill="#ffffff"/><rect x="12" y="12" width="1" height="1" fill="#000000"/><rect x="13" y="12" width="1" height="1" fill="#ffffff"/><rect x="14" y="12" width="1" height="1" fill="#808080"/><rect x="15" y="12" width="1" height="1" fill="#ffffff"/><rect x="16" y="12" width="1" height="1" fill="#000000"/><rect x="0" y="13" width="1" height="1" fill="#000000"/><rect x="1" y="13" width="3" height="1" fill="#ffffff"/><rect x="4" y="13" width="1" height="1" fill="#000000"/><rect x="5" y="13" width="3" height="1" fill="#ffffff"/><rect x="8" y="13" width="1" height="1" fill="#000000"/><rect x="9" y="13" width="3" height="1" fill="#ffffff"/><rect x="12" y="13" width="1" height="1" fill="#000000"/><rect x="13" y="13" width="3" height="1" fill="#ffffff"/><rect x="16" y="13" width="1" height="1" fill="#000000"/><rect x="0" y="14" width="17" height="1" fill="#000000"/></svg>
<div class="t" style="left:137.3px;top:108px;font-size:14px;line-height:18px;letter-spacing:0.068px;color:#000;">Передача данных</div>
<svg style="left:132px;top:127px" width="17" height="15" shape-rendering="crispEdges"><rect x="0" y="0" width="17" height="1" fill="#000000"/><rect x="0" y="1" width="1" height="1" fill="#000000"/><rect x="1" y="1" width="3" height="1" fill="#ffffff"/><rect x="4" y="1" width="1" height="1" fill="#000000"/><rect x="5" y="1" width="3" height="1" fill="#ffffff"/><rect x="8" y="1" width="1" height="1" fill="#000000"/><rect x="9" y="1" width="3" height="1" fill="#ffffff"/><rect x="12" y="1" width="1" height="1" fill="#000000"/><rect x="13" y="1" width="3" height="1" fill="#ffffff"/><rect x="16" y="1" width="1" height="1" fill="#000000"/><rect x="0" y="2" width="1" height="1" fill="#000000"/><rect x="1" y="2" width="1" height="1" fill="#ffffff"/><rect x="2" y="2" width="1" height="1" fill="#808080"/><rect x="3" y="2" width="1" height="1" fill="#ffffff"/><rect x="4" y="2" width="1" height="1" fill="#000000"/><rect x="5" y="2" width="1" height="1" fill="#ffffff"/><rect x="6" y="2" width="1" height="1" fill="#808080"/><rect x="7" y="2" width="1" height="1" fill="#ffffff"/><rect x="8" y="2" width="1" height="1" fill="#000000"/><rect x="9" y="2" width="1" height="1" fill="#ffffff"/><rect x="10" y="2" width="1" height="1" fill="#808080"/><rect x="11" y="2" width="1" height="1" fill="#ffffff"/><rect x="12" y="2" width="1" height="1" fill="#000000"/><rect x="13" y="2" width="1" height="1" fill="#ffffff"/><rect x="14" y="2" width="1" height="1" fill="#808080"/><rect x="15" y="2" width="1" height="1" fill="#ffffff"/><rect x="16" y="2" width="1" height="1" fill="#000000"/><rect x="0" y="3" width="1" height="1" fill="#000000"/><rect x="1" y="3" width="1" height="1" fill="#ffffff"/><rect x="2" y="3" width="1" height="1" fill="#808080"/><rect x="3" y="3" width="1" height="1" fill="#ffffff"/><rect x="4" y="3" width="1" height="1" fill="#000000"/><rect x="5" y="3" width="1" height="1" fill="#ffffff"/><rect x="6" y="3" width="1" height="1" fill="#808080"/><rect x="7" y="3" width="1" height="1" fill="#ffffff"/><rect x="8" y="3" width="1" height="1" fill="#000000"/><rect x="9" y="3" width="1" height="1" fill="#ffffff"/><rect x="10" y="3" width="1" height="1" fill="#808080"/><rect x="11" y="3" width="1" height="1" fill="#ffffff"/><rect x="12" y="3" width="1" height="1" fill="#000000"/><rect x="13" y="3" width="1" height="1" fill="#ffffff"/><rect x="14" y="3" width="1" height="1" fill="#808080"/><rect x="15" y="3" width="1" height="1" fill="#ffffff"/><rect x="16" y="3" width="1" height="1" fill="#000000"/><rect x="0" y="4" width="1" height="1" fill="#000000"/><rect x="1" y="4" width="1" height="1" fill="#ffffff"/><rect x="2" y="4" width="1" height="1" fill="#808080"/><rect x="3" y="4" width="1" height="1" fill="#ffffff"/><rect x="4" y="4" width="1" height="1" fill="#000000"/><rect x="5" y="4" width="1" height="1" fill="#ffffff"/><rect x="6" y="4" width="1" height="1" fill="#808080"/><rect x="7" y="4" width="1" height="1" fill="#ffffff"/><rect x="8" y="4" width="1" height="1" fill="#000000"/><rect x="9" y="4" width="1" height="1" fill="#ffffff"/><rect x="10" y="4" width="1" height="1" fill="#808080"/><rect x="11" y="4" width="1" height="1" fill="#ffffff"/><rect x="12" y="4" width="1" height="1" fill="#000000"/><rect x="13" y="4" width="1" height="1" fill="#ffffff"/><rect x="14" y="4" width="1" height="1" fill="#808080"/><rect x="15" y="4" width="1" height="1" fill="#ffffff"/><rect x="16" y="4" width="1" height="1" fill="#000000"/><rect x="0" y="5" width="1" height="1" fill="#000000"/><rect x="1" y="5" width="1" height="1" fill="#ffffff"/><rect x="2" y="5" width="1" height="1" fill="#808080"/><rect x="3" y="5" width="1" height="1" fill="#ffffff"/><rect x="4" y="5" width="1" height="1" fill="#000000"/><rect x="5" y="5" width="1" height="1" fill="#ffffff"/><rect x="6" y="5" width="1" height="1" fill="#808080"/><rect x="7" y="5" width="1" height="1" fill="#ffffff"/><rect x="8" y="5" width="1" height="1" fill="#000000"/><rect x="9" y="5" width="1" height="1" fill="#ffffff"/><rect x="10" y="5" width="1" height="1" fill="#808080"/><rect x="11" y="5" width="1" height="1" fill="#ffffff"/><rect x="12" y="5" width="1" height="1" fill="#000000"/><rect x="13" y="5" width="1" height="1" fill="#ffffff"/><rect x="14" y="5" width="1" height="1" fill="#808080"/><rect x="15" y="5" width="1" height="1" fill="#ffffff"/><rect x="16" y="5" width="1" height="1" fill="#000000"/><rect x="0" y="6" width="1" height="1" fill="#000000"/><rect x="1" y="6" width="1" height="1" fill="#ffffff"/><rect x="2" y="6" width="1" height="1" fill="#808080"/><rect x="3" y="6" width="1" height="1" fill="#ffffff"/><rect x="4" y="6" width="1" height="1" fill="#000000"/><rect x="5" y="6" width="1" height="1" fill="#ffffff"/><rect x="6" y="6" width="1" height="1" fill="#808080"/><rect x="7" y="6" width="1" height="1" fill="#ffffff"/><rect x="8" y="6" width="1" height="1" fill="#000000"/><rect x="9" y="6" width="1" height="1" fill="#ffffff"/><rect x="10" y="6" width="1" height="1" fill="#808080"/><rect x="11" y="6" width="1" height="1" fill="#ffffff"/><rect x="12" y="6" width="1" height="1" fill="#000000"/><rect x="13" y="6" width="1" height="1" fill="#ffffff"/><rect x="14" y="6" width="1" height="1" fill="#808080"/><rect x="15" y="6" width="1" height="1" fill="#ffffff"/><rect x="16" y="6" width="1" height="1" fill="#000000"/><rect x="0" y="7" width="1" height="1" fill="#000000"/><rect x="1" y="7" width="1" height="1" fill="#ffffff"/><rect x="2" y="7" width="1" height="1" fill="#808080"/><rect x="3" y="7" width="1" height="1" fill="#ffffff"/><rect x="4" y="7" width="1" height="1" fill="#000000"/><rect x="5" y="7" width="1" height="1" fill="#ffffff"/><rect x="6" y="7" width="1" height="1" fill="#808080"/><rect x="7" y="7" width="1" height="1" fill="#ffffff"/><rect x="8" y="7" width="1" height="1" fill="#000000"/><rect x="9" y="7" width="1" height="1" fill="#ffffff"/><rect x="10" y="7" width="1" height="1" fill="#808080"/><rect x="11" y="7" width="1" height="1" fill="#ffffff"/><rect x="12" y="7" width="1" height="1" fill="#000000"/><rect x="13" y="7" width="1" height="1" fill="#ffffff"/><rect x="14" y="7" width="1" height="1" fill="#808080"/><rect x="15" y="7" width="1" height="1" fill="#ffffff"/><rect x="16" y="7" width="1" height="1" fill="#000000"/><rect x="0" y="8" width="1" height="1" fill="#000000"/><rect x="1" y="8" width="1" height="1" fill="#ffffff"/><rect x="2" y="8" width="1" height="1" fill="#808080"/><rect x="3" y="8" width="1" height="1" fill="#ffffff"/><rect x="4" y="8" width="1" height="1" fill="#000000"/><rect x="5" y="8" width="1" height="1" fill="#ffffff"/><rect x="6" y="8" width="1" height="1" fill="#808080"/><rect x="7" y="8" width="1" height="1" fill="#ffffff"/><rect x="8" y="8" width="1" height="1" fill="#000000"/><rect x="9" y="8" width="1" height="1" fill="#ffffff"/><rect x="10" y="8" width="1" height="1" fill="#808080"/><rect x="11" y="8" width="1" height="1" fill="#ffffff"/><rect x="12" y="8" width="1" height="1" fill="#000000"/><rect x="13" y="8" width="1" height="1" fill="#ffffff"/><rect x="14" y="8" width="1" height="1" fill="#808080"/><rect x="15" y="8" width="1" height="1" fill="#ffffff"/><rect x="16" y="8" width="1" height="1" fill="#000000"/><rect x="0" y="9" width="1" height="1" fill="#000000"/><rect x="1" y="9" width="1" height="1" fill="#ffffff"/><rect x="2" y="9" width="1" height="1" fill="#808080"/><rect x="3" y="9" width="1" height="1" fill="#ffffff"/><rect x="4" y="9" width="1" height="1" fill="#000000"/><rect x="5" y="9" width="1" height="1" fill="#ffffff"/><rect x="6" y="9" width="1" height="1" fill="#808080"/><rect x="7" y="9" width="1" height="1" fill="#ffffff"/><rect x="8" y="9" width="1" height="1" fill="#000000"/><rect x="9" y="9" width="1" height="1" fill="#ffffff"/><rect x="10" y="9" width="1" height="1" fill="#808080"/><rect x="11" y="9" width="1" height="1" fill="#ffffff"/><rect x="12" y="9" width="1" height="1" fill="#000000"/><rect x="13" y="9" width="1" height="1" fill="#ffffff"/><rect x="14" y="9" width="1" height="1" fill="#808080"/><rect x="15" y="9" width="1" height="1" fill="#ffffff"/><rect x="16" y="9" width="1" height="1" fill="#000000"/><rect x="0" y="10" width="1" height="1" fill="#000000"/><rect x="1" y="10" width="1" height="1" fill="#ffffff"/><rect x="2" y="10" width="1" height="1" fill="#808080"/><rect x="3" y="10" width="1" height="1" fill="#ffffff"/><rect x="4" y="10" width="1" height="1" fill="#000000"/><rect x="5" y="10" width="1" height="1" fill="#ffffff"/><rect x="6" y="10" width="1" height="1" fill="#808080"/><rect x="7" y="10" width="1" height="1" fill="#ffffff"/><rect x="8" y="10" width="1" height="1" fill="#000000"/><rect x="9" y="10" width="1" height="1" fill="#ffffff"/><rect x="10" y="10" width="1" height="1" fill="#808080"/><rect x="11" y="10" width="1" height="1" fill="#ffffff"/><rect x="12" y="10" width="1" height="1" fill="#000000"/><rect x="13" y="10" width="1" height="1" fill="#ffffff"/><rect x="14" y="10" width="1" height="1" fill="#808080"/><rect x="15" y="10" width="1" height="1" fill="#ffffff"/><rect x="16" y="10" width="1" height="1" fill="#000000"/><rect x="0" y="11" width="1" height="1" fill="#000000"/><rect x="1" y="11" width="1" height="1" fill="#ffffff"/><rect x="2" y="11" width="1" height="1" fill="#808080"/><rect x="3" y="11" width="1" height="1" fill="#ffffff"/><rect x="4" y="11" width="1" height="1" fill="#000000"/><rect x="5" y="11" width="1" height="1" fill="#ffffff"/><rect x="6" y="11" width="1" height="1" fill="#808080"/><rect x="7" y="11" width="1" height="1" fill="#ffffff"/><rect x="8" y="11" width="1" height="1" fill="#000000"/><rect x="9" y="11" width="1" height="1" fill="#ffffff"/><rect x="10" y="11" width="1" height="1" fill="#808080"/><rect x="11" y="11" width="1" height="1" fill="#ffffff"/><rect x="12" y="11" width="1" height="1" fill="#000000"/><rect x="13" y="11" width="1" height="1" fill="#ffffff"/><rect x="14" y="11" width="1" height="1" fill="#808080"/><rect x="15" y="11" width="1" height="1" fill="#ffffff"/><rect x="16" y="11" width="1" height="1" fill="#000000"/><rect x="0" y="12" width="1" height="1" fill="#000000"/><rect x="1" y="12" width="1" height="1" fill="#ffffff"/><rect x="2" y="12" width="1" height="1" fill="#808080"/><rect x="3" y="12" width="1" height="1" fill="#ffffff"/><rect x="4" y="12" width="1" height="1" fill="#000000"/><rect x="5" y="12" width="1" height="1" fill="#ffffff"/><rect x="6" y="12" width="1" height="1" fill="#808080"/><rect x="7" y="12" width="1" height="1" fill="#ffffff"/><rect x="8" y="12" width="1" height="1" fill="#000000"/><rect x="9" y="12" width="1" height="1" fill="#ffffff"/><rect x="10" y="12" width="1" height="1" fill="#808080"/><rect x="11" y="12" width="1" height="1" fill="#ffffff"/><rect x="12" y="12" width="1" height="1" fill="#000000"/><rect x="13" y="12" width="1" height="1" fill="#ffffff"/><rect x="14" y="12" width="1" height="1" fill="#808080"/><rect x="15" y="12" width="1" height="1" fill="#ffffff"/><rect x="16" y="12" width="1" height="1" fill="#000000"/><rect x="0" y="13" width="1" height="1" fill="#000000"/><rect x="1" y="13" width="3" height="1" fill="#ffffff"/><rect x="4" y="13" width="1" height="1" fill="#000000"/><rect x="5" y="13" width="3" height="1" fill="#ffffff"/><rect x="8" y="13" width="1" height="1" fill="#000000"/><rect x="9" y="13" width="3" height="1" fill="#ffffff"/><rect x="12" y="13" width="1" height="1" fill="#000000"/><rect x="13" y="13" width="3" height="1" fill="#ffffff"/><rect x="16" y="13" width="1" height="1" fill="#000000"/><rect x="0" y="14" width="17" height="1" fill="#000000"/></svg>
<div style="position:absolute;left:152px;top:126px;width:60px;height:18px;background:#0078d7;outline:1px dotted #ff8728;outline-offset:-1px;"></div>
<div class="t" style="left:156px;top:126px;font-size:14px;line-height:18px;letter-spacing:-0.44px;color:#fff;">ASDU 1</div>
<svg style="left:149px;top:146px" width="19" height="12" shape-rendering="crispEdges"><rect x="2" y="0" width="17" height="1" fill="#000000"/><rect x="2" y="1" width="1" height="1" fill="#000000"/><rect x="3" y="1" width="15" height="1" fill="#ffffff"/><rect x="18" y="1" width="1" height="1" fill="#000000"/><rect x="0" y="2" width="3" height="1" fill="#000000"/><rect x="3" y="2" width="2" height="1" fill="#ffffff"/><rect x="5" y="2" width="2" height="1" fill="#008000"/><rect x="7" y="2" width="7" height="1" fill="#ffffff"/><rect x="14" y="2" width="2" height="1" fill="#ff0000"/><rect x="16" y="2" width="2" height="1" fill="#ffffff"/><rect x="18" y="2" width="1" height="1" fill="#000000"/><rect x="0" y="3" width="1" height="1" fill="#000000"/><rect x="1" y="3" width="1" height="1" fill="#ffffff"/><rect x="2" y="3" width="1" height="1" fill="#000000"/><rect x="3" y="3" width="1" height="1" fill="#ffffff"/><rect x="4" y="3" width="4" height="1" fill="#008000"/><rect x="8" y="3" width="5" height="1" fill="#ffffff"/><rect x="13" y="3" width="4" height="1" fill="#ff0000"/><rect x="17" y="3" width="1" height="1" fill="#ffffff"/><rect x="18" y="3" width="1" height="1" fill="#000000"/><rect x="0" y="4" width="1" height="1" fill="#000000"/><rect x="1" y="4" width="1" height="1" fill="#ffffff"/><rect x="2" y="4" width="1" height="1" fill="#000000"/><rect x="3" y="4" width="1" height="1" fill="#ffffff"/><rect x="4" y="4" width="5" height="1" fill="#008000"/><rect x="9" y="4" width="3" height="1" fill="#ffffff"/><rect x="12" y="4" width="5" height="1" fill="#ff0000"/><rect x="17" y="4" width="1" height="1" fill="#ffffff"/><rect x="18" y="4" width="1" height="1" fill="#000000"/><rect x="0" y="5" width="1" height="1" fill="#000000"/><rect x="1" y="5" width="1" height="1" fill="#ffffff"/><rect x="2" y="5" width="1" height="1" fill="#000000"/><rect x="3" y="5" width="1" height="1" fill="#ffffff"/><rect x="4" y="5" width="5" height="1" fill="#008000"/><rect x="9" y="5" width="3" height="1" fill="#ffffff"/><rect x="12" y="5" width="5" height="1" fill="#ff0000"/><rect x="17" y="5" width="1" height="1" fill="#ffffff"/><rect x="18" y="5" width="1" height="1" fill="#000000"/><rect x="0" y="6" width="1" height="1" fill="#000000"/><rect x="1" y="6" width="1" height="1" fill="#ffffff"/><rect x="2" y="6" width="1" height="1" fill="#000000"/><rect x="3" y="6" width="1" height="1" fill="#ffffff"/><rect x="4" y="6" width="4" height="1" fill="#008000"/><rect x="8" y="6" width="5" height="1" fill="#ffffff"/><rect x="13" y="6" width="4" height="1" fill="#ff0000"/><rect x="17" y="6" width="1" height="1" fill="#ffffff"/><rect x="18" y="6" width="1" height="1" fill="#000000"/><rect x="0" y="7" width="1" height="1" fill="#000000"/><rect x="1" y="7" width="1" height="1" fill="#ffffff"/><rect x="2" y="7" width="1" height="1" fill="#000000"/><rect x="3" y="7" width="2" height="1" fill="#ffffff"/><rect x="5" y="7" width="2" height="1" fill="#008000"/><rect x="7" y="7" width="7" height="1" fill="#ffffff"/><rect x="14" y="7" width="2" height="1" fill="#ff0000"/><rect x="16" y="7" width="2" height="1" fill="#ffffff"/><rect x="18" y="7" width="1" height="1" fill="#000000"/><rect x="0" y="8" width="1" height="1" fill="#000000"/><rect x="1" y="8" width="1" height="1" fill="#ffffff"/><rect x="2" y="8" width="1" height="1" fill="#000000"/><rect x="3" y="8" width="15" height="1" fill="#ffffff"/><rect x="18" y="8" width="1" height="1" fill="#000000"/><rect x="0" y="9" width="1" height="1" fill="#000000"/><rect x="1" y="9" width="1" height="1" fill="#ffffff"/><rect x="2" y="9" width="17" height="1" fill="#000000"/><rect x="0" y="10" width="1" height="1" fill="#000000"/><rect x="1" y="10" width="15" height="1" fill="#ffffff"/><rect x="16" y="10" width="1" height="1" fill="#000000"/><rect x="0" y="11" width="17" height="1" fill="#000000"/></svg>
<div class="t" style="left:173.5px;top:144px;font-size:14px;line-height:18px;letter-spacing:0.262px;color:#000;">Группа ТС</div>
<svg style="left:167px;top:166px" width="19" height="10" shape-rendering="crispEdges"><rect x="0" y="0" width="19" height="1" fill="#000000"/><rect x="0" y="1" width="1" height="1" fill="#000000"/><rect x="1" y="1" width="17" height="1" fill="#ffffff"/><rect x="18" y="1" width="1" height="1" fill="#000000"/><rect x="0" y="2" width="1" height="1" fill="#000000"/><rect x="1" y="2" width="3" height="1" fill="#ffffff"/><rect x="4" y="2" width="2" height="1" fill="#008000"/><rect x="6" y="2" width="7" height="1" fill="#ffffff"/><rect x="13" y="2" width="2" height="1" fill="#ff0000"/><rect x="15" y="2" width="3" height="1" fill="#ffffff"/><rect x="18" y="2" width="1" height="1" fill="#000000"/><rect x="0" y="3" width="1" height="1" fill="#000000"/><rect x="1" y="3" width="2" height="1" fill="#ffffff"/><rect x="3" y="3" width="4" height="1" fill="#008000"/><rect x="7" y="3" width="5" height="1" fill="#ffffff"/><rect x="12" y="3" width="4" height="1" fill="#ff0000"/><rect x="16" y="3" width="2" height="1" fill="#ffffff"/><rect x="18" y="3" width="1" height="1" fill="#000000"/><rect x="0" y="4" width="1" height="1" fill="#000000"/><rect x="1" y="4" width="1" height="1" fill="#ffffff"/><rect x="2" y="4" width="6" height="1" fill="#008000"/><rect x="8" y="4" width="3" height="1" fill="#ffffff"/><rect x="11" y="4" width="6" height="1" fill="#ff0000"/><rect x="17" y="4" width="1" height="1" fill="#ffffff"/><rect x="18" y="4" width="1" height="1" fill="#000000"/><rect x="0" y="5" width="1" height="1" fill="#000000"/><rect x="1" y="5" width="1" height="1" fill="#ffffff"/><rect x="2" y="5" width="6" height="1" fill="#008000"/><rect x="8" y="5" width="3" height="1" fill="#ffffff"/><rect x="11" y="5" width="6" height="1" fill="#ff0000"/><rect x="17" y="5" width="1" height="1" fill="#ffffff"/><rect x="18" y="5" width="1" height="1" fill="#000000"/><rect x="0" y="6" width="1" height="1" fill="#000000"/><rect x="1" y="6" width="2" height="1" fill="#ffffff"/><rect x="3" y="6" width="4" height="1" fill="#008000"/><rect x="7" y="6" width="5" height="1" fill="#ffffff"/><rect x="12" y="6" width="4" height="1" fill="#ff0000"/><rect x="16" y="6" width="2" height="1" fill="#ffffff"/><rect x="18" y="6" width="1" height="1" fill="#000000"/><rect x="0" y="7" width="1" height="1" fill="#000000"/><rect x="1" y="7" width="3" height="1" fill="#ffffff"/><rect x="4" y="7" width="2" height="1" fill="#008000"/><rect x="6" y="7" width="7" height="1" fill="#ffffff"/><rect x="13" y="7" width="2" height="1" fill="#ff0000"/><rect x="15" y="7" width="3" height="1" fill="#ffffff"/><rect x="18" y="7" width="1" height="1" fill="#000000"/><rect x="0" y="8" width="1" height="1" fill="#000000"/><rect x="1" y="8" width="17" height="1" fill="#ffffff"/><rect x="18" y="8" width="1" height="1" fill="#000000"/><rect x="0" y="9" width="19" height="1" fill="#000000"/></svg>
<div class="t" style="left:192.5px;top:162px;font-size:14px;line-height:18px;letter-spacing:-0.101px;color:#000;">ТС (однопоз.)</div>
<div class="t" style="left:286.4px;top:162px;font-size:14px;line-height:18px;letter-spacing:-0.924px;color:#000;">31 (1 :1 :1)</div>
<svg style="left:167px;top:184px" width="19" height="10" shape-rendering="crispEdges"><rect x="0" y="0" width="19" height="1" fill="#000000"/><rect x="0" y="1" width="1" height="1" fill="#000000"/><rect x="1" y="1" width="17" height="1" fill="#ffffff"/><rect x="18" y="1" width="1" height="1" fill="#000000"/><rect x="0" y="2" width="1" height="1" fill="#000000"/><rect x="1" y="2" width="3" height="1" fill="#ffffff"/><rect x="4" y="2" width="2" height="1" fill="#008000"/><rect x="6" y="2" width="7" height="1" fill="#ffffff"/><rect x="13" y="2" width="2" height="1" fill="#ff0000"/><rect x="15" y="2" width="3" height="1" fill="#ffffff"/><rect x="18" y="2" width="1" height="1" fill="#000000"/><rect x="0" y="3" width="1" height="1" fill="#000000"/><rect x="1" y="3" width="2" height="1" fill="#ffffff"/><rect x="3" y="3" width="4" height="1" fill="#008000"/><rect x="7" y="3" width="5" height="1" fill="#ffffff"/><rect x="12" y="3" width="4" height="1" fill="#ff0000"/><rect x="16" y="3" width="2" height="1" fill="#ffffff"/><rect x="18" y="3" width="1" height="1" fill="#000000"/><rect x="0" y="4" width="1" height="1" fill="#000000"/><rect x="1" y="4" width="1" height="1" fill="#ffffff"/><rect x="2" y="4" width="6" height="1" fill="#008000"/><rect x="8" y="4" width="3" height="1" fill="#ffffff"/><rect x="11" y="4" width="6" height="1" fill="#ff0000"/><rect x="17" y="4" width="1" height="1" fill="#ffffff"/><rect x="18" y="4" width="1" height="1" fill="#000000"/><rect x="0" y="5" width="1" height="1" fill="#000000"/><rect x="1" y="5" width="1" height="1" fill="#ffffff"/><rect x="2" y="5" width="6" height="1" fill="#008000"/><rect x="8" y="5" width="3" height="1" fill="#ffffff"/><rect x="11" y="5" width="6" height="1" fill="#ff0000"/><rect x="17" y="5" width="1" height="1" fill="#ffffff"/><rect x="18" y="5" width="1" height="1" fill="#000000"/><rect x="0" y="6" width="1" height="1" fill="#000000"/><rect x="1" y="6" width="2" height="1" fill="#ffffff"/><rect x="3" y="6" width="4" height="1" fill="#008000"/><rect x="7" y="6" width="5" height="1" fill="#ffffff"/><rect x="12" y="6" width="4" height="1" fill="#ff0000"/><rect x="16" y="6" width="2" height="1" fill="#ffffff"/><rect x="18" y="6" width="1" height="1" fill="#000000"/><rect x="0" y="7" width="1" height="1" fill="#000000"/><rect x="1" y="7" width="3" height="1" fill="#ffffff"/><rect x="4" y="7" width="2" height="1" fill="#008000"/><rect x="6" y="7" width="7" height="1" fill="#ffffff"/><rect x="13" y="7" width="2" height="1" fill="#ff0000"/><rect x="15" y="7" width="3" height="1" fill="#ffffff"/><rect x="18" y="7" width="1" height="1" fill="#000000"/><rect x="0" y="8" width="1" height="1" fill="#000000"/><rect x="1" y="8" width="17" height="1" fill="#ffffff"/><rect x="18" y="8" width="1" height="1" fill="#000000"/><rect x="0" y="9" width="19" height="1" fill="#000000"/></svg>
<div class="t" style="left:192.5px;top:180px;font-size:14px;line-height:18px;letter-spacing:-0.101px;color:#000;">ТС (однопоз.)</div>
<div class="t" style="left:286.4px;top:180px;font-size:14px;line-height:18px;letter-spacing:-0.924px;color:#000;">32 (1 :1 :2)</div>
<svg style="left:167px;top:202px" width="19" height="10" shape-rendering="crispEdges"><rect x="0" y="0" width="19" height="1" fill="#000000"/><rect x="0" y="1" width="1" height="1" fill="#000000"/><rect x="1" y="1" width="17" height="1" fill="#ffffff"/><rect x="18" y="1" width="1" height="1" fill="#000000"/><rect x="0" y="2" width="1" height="1" fill="#000000"/><rect x="1" y="2" width="3" height="1" fill="#ffffff"/><rect x="4" y="2" width="2" height="1" fill="#008000"/><rect x="6" y="2" width="7" height="1" fill="#ffffff"/><rect x="13" y="2" width="2" height="1" fill="#ff0000"/><rect x="15" y="2" width="3" height="1" fill="#ffffff"/><rect x="18" y="2" width="1" height="1" fill="#000000"/><rect x="0" y="3" width="1" height="1" fill="#000000"/><rect x="1" y="3" width="2" height="1" fill="#ffffff"/><rect x="3" y="3" width="4" height="1" fill="#008000"/><rect x="7" y="3" width="5" height="1" fill="#ffffff"/><rect x="12" y="3" width="4" height="1" fill="#ff0000"/><rect x="16" y="3" width="2" height="1" fill="#ffffff"/><rect x="18" y="3" width="1" height="1" fill="#000000"/><rect x="0" y="4" width="1" height="1" fill="#000000"/><rect x="1" y="4" width="1" height="1" fill="#ffffff"/><rect x="2" y="4" width="6" height="1" fill="#008000"/><rect x="8" y="4" width="3" height="1" fill="#ffffff"/><rect x="11" y="4" width="6" height="1" fill="#ff0000"/><rect x="17" y="4" width="1" height="1" fill="#ffffff"/><rect x="18" y="4" width="1" height="1" fill="#000000"/><rect x="0" y="5" width="1" height="1" fill="#000000"/><rect x="1" y="5" width="1" height="1" fill="#ffffff"/><rect x="2" y="5" width="6" height="1" fill="#008000"/><rect x="8" y="5" width="3" height="1" fill="#ffffff"/><rect x="11" y="5" width="6" height="1" fill="#ff0000"/><rect x="17" y="5" width="1" height="1" fill="#ffffff"/><rect x="18" y="5" width="1" height="1" fill="#000000"/><rect x="0" y="6" width="1" height="1" fill="#000000"/><rect x="1" y="6" width="2" height="1" fill="#ffffff"/><rect x="3" y="6" width="4" height="1" fill="#008000"/><rect x="7" y="6" width="5" height="1" fill="#ffffff"/><rect x="12" y="6" width="4" height="1" fill="#ff0000"/><rect x="16" y="6" width="2" height="1" fill="#ffffff"/><rect x="18" y="6" width="1" height="1" fill="#000000"/><rect x="0" y="7" width="1" height="1" fill="#000000"/><rect x="1" y="7" width="3" height="1" fill="#ffffff"/><rect x="4" y="7" width="2" height="1" fill="#008000"/><rect x="6" y="7" width="7" height="1" fill="#ffffff"/><rect x="13" y="7" width="2" height="1" fill="#ff0000"/><rect x="15" y="7" width="3" height="1" fill="#ffffff"/><rect x="18" y="7" width="1" height="1" fill="#000000"/><rect x="0" y="8" width="1" height="1" fill="#000000"/><rect x="1" y="8" width="17" height="1" fill="#ffffff"/><rect x="18" y="8" width="1" height="1" fill="#000000"/><rect x="0" y="9" width="19" height="1" fill="#000000"/></svg>
<div class="t" style="left:192.5px;top:198px;font-size:14px;line-height:18px;letter-spacing:-0.101px;color:#000;">ТС (однопоз.)</div>
<div class="t" style="left:286.4px;top:198px;font-size:14px;line-height:18px;letter-spacing:-0.924px;color:#000;">33 (1 :1 :3)</div>
<svg style="left:167px;top:220px" width="19" height="10" shape-rendering="crispEdges"><rect x="0" y="0" width="19" height="1" fill="#000000"/><rect x="0" y="1" width="1" height="1" fill="#000000"/><rect x="1" y="1" width="17" height="1" fill="#ffffff"/><rect x="18" y="1" width="1" height="1" fill="#000000"/><rect x="0" y="2" width="1" height="1" fill="#000000"/><rect x="1" y="2" width="3" height="1" fill="#ffffff"/><rect x="4" y="2" width="2" height="1" fill="#008000"/><rect x="6" y="2" width="7" height="1" fill="#ffffff"/><rect x="13" y="2" width="2" height="1" fill="#ff0000"/><rect x="15" y="2" width="3" height="1" fill="#ffffff"/><rect x="18" y="2" width="1" height="1" fill="#000000"/><rect x="0" y="3" width="1" height="1" fill="#000000"/><rect x="1" y="3" width="2" height="1" fill="#ffffff"/><rect x="3" y="3" width="4" height="1" fill="#008000"/><rect x="7" y="3" width="5" height="1" fill="#ffffff"/><rect x="12" y="3" width="4" height="1" fill="#ff0000"/><rect x="16" y="3" width="2" height="1" fill="#ffffff"/><rect x="18" y="3" width="1" height="1" fill="#000000"/><rect x="0" y="4" width="1" height="1" fill="#000000"/><rect x="1" y="4" width="1" height="1" fill="#ffffff"/><rect x="2" y="4" width="6" height="1" fill="#008000"/><rect x="8" y="4" width="3" height="1" fill="#ffffff"/><rect x="11" y="4" width="6" height="1" fill="#ff0000"/><rect x="17" y="4" width="1" height="1" fill="#ffffff"/><rect x="18" y="4" width="1" height="1" fill="#000000"/><rect x="0" y="5" width="1" height="1" fill="#000000"/><rect x="1" y="5" width="1" height="1" fill="#ffffff"/><rect x="2" y="5" width="6" height="1" fill="#008000"/><rect x="8" y="5" width="3" height="1" fill="#ffffff"/><rect x="11" y="5" width="6" height="1" fill="#ff0000"/><rect x="17" y="5" width="1" height="1" fill="#ffffff"/><rect x="18" y="5" width="1" height="1" fill="#000000"/><rect x="0" y="6" width="1" height="1" fill="#000000"/><rect x="1" y="6" width="2" height="1" fill="#ffffff"/><rect x="3" y="6" width="4" height="1" fill="#008000"/><rect x="7" y="6" width="5" height="1" fill="#ffffff"/><rect x="12" y="6" width="4" height="1" fill="#ff0000"/><rect x="16" y="6" width="2" height="1" fill="#ffffff"/><rect x="18" y="6" width="1" height="1" fill="#000000"/><rect x="0" y="7" width="1" height="1" fill="#000000"/><rect x="1" y="7" width="3" height="1" fill="#ffffff"/><rect x="4" y="7" width="2" height="1" fill="#008000"/><rect x="6" y="7" width="7" height="1" fill="#ffffff"/><rect x="13" y="7" width="2" height="1" fill="#ff0000"/><rect x="15" y="7" width="3" height="1" fill="#ffffff"/><rect x="18" y="7" width="1" height="1" fill="#000000"/><rect x="0" y="8" width="1" height="1" fill="#000000"/><rect x="1" y="8" width="17" height="1" fill="#ffffff"/><rect x="18" y="8" width="1" height="1" fill="#000000"/><rect x="0" y="9" width="19" height="1" fill="#000000"/></svg>
<div class="t" style="left:192.5px;top:216px;font-size:14px;line-height:18px;letter-spacing:-0.101px;color:#000;">ТС (однопоз.)</div>
<div class="t" style="left:286.4px;top:216px;font-size:14px;line-height:18px;letter-spacing:-0.924px;color:#000;">34 (1 :1 :4)</div>
<svg style="left:167px;top:238px" width="19" height="10" shape-rendering="crispEdges"><rect x="0" y="0" width="19" height="1" fill="#000000"/><rect x="0" y="1" width="1" height="1" fill="#000000"/><rect x="1" y="1" width="17" height="1" fill="#ffffff"/><rect x="18" y="1" width="1" height="1" fill="#000000"/><rect x="0" y="2" width="1" height="1" fill="#000000"/><rect x="1" y="2" width="3" height="1" fill="#ffffff"/><rect x="4" y="2" width="2" height="1" fill="#008000"/><rect x="6" y="2" width="7" height="1" fill="#ffffff"/><rect x="13" y="2" width="2" height="1" fill="#ff0000"/><rect x="15" y="2" width="3" height="1" fill="#ffffff"/><rect x="18" y="2" width="1" height="1" fill="#000000"/><rect x="0" y="3" width="1" height="1" fill="#000000"/><rect x="1" y="3" width="2" height="1" fill="#ffffff"/><rect x="3" y="3" width="4" height="1" fill="#008000"/><rect x="7" y="3" width="5" height="1" fill="#ffffff"/><rect x="12" y="3" width="4" height="1" fill="#ff0000"/><rect x="16" y="3" width="2" height="1" fill="#ffffff"/><rect x="18" y="3" width="1" height="1" fill="#000000"/><rect x="0" y="4" width="1" height="1" fill="#000000"/><rect x="1" y="4" width="1" height="1" fill="#ffffff"/><rect x="2" y="4" width="6" height="1" fill="#008000"/><rect x="8" y="4" width="3" height="1" fill="#ffffff"/><rect x="11" y="4" width="6" height="1" fill="#ff0000"/><rect x="17" y="4" width="1" height="1" fill="#ffffff"/><rect x="18" y="4" width="1" height="1" fill="#000000"/><rect x="0" y="5" width="1" height="1" fill="#000000"/><rect x="1" y="5" width="1" height="1" fill="#ffffff"/><rect x="2" y="5" width="6" height="1" fill="#008000"/><rect x="8" y="5" width="3" height="1" fill="#ffffff"/><rect x="11" y="5" width="6" height="1" fill="#ff0000"/><rect x="17" y="5" width="1" height="1" fill="#ffffff"/><rect x="18" y="5" width="1" height="1" fill="#000000"/><rect x="0" y="6" width="1" height="1" fill="#000000"/><rect x="1" y="6" width="2" height="1" fill="#ffffff"/><rect x="3" y="6" width="4" height="1" fill="#008000"/><rect x="7" y="6" width="5" height="1" fill="#ffffff"/><rect x="12" y="6" width="4" height="1" fill="#ff0000"/><rect x="16" y="6" width="2" height="1" fill="#ffffff"/><rect x="18" y="6" width="1" height="1" fill="#000000"/><rect x="0" y="7" width="1" height="1" fill="#000000"/><rect x="1" y="7" width="3" height="1" fill="#ffffff"/><rect x="4" y="7" width="2" height="1" fill="#008000"/><rect x="6" y="7" width="7" height="1" fill="#ffffff"/><rect x="13" y="7" width="2" height="1" fill="#ff0000"/><rect x="15" y="7" width="3" height="1" fill="#ffffff"/><rect x="18" y="7" width="1" height="1" fill="#000000"/><rect x="0" y="8" width="1" height="1" fill="#000000"/><rect x="1" y="8" width="17" height="1" fill="#ffffff"/><rect x="18" y="8" width="1" height="1" fill="#000000"/><rect x="0" y="9" width="19" height="1" fill="#000000"/></svg>
<div class="t" style="left:192.5px;top:234px;font-size:14px;line-height:18px;letter-spacing:-0.101px;color:#000;">ТС (однопоз.)</div>
<div class="t" style="left:286.4px;top:234px;font-size:14px;line-height:18px;letter-spacing:-0.924px;color:#000;">35 (1 :1 :5)</div>
<svg style="left:167px;top:256px" width="19" height="10" shape-rendering="crispEdges"><rect x="0" y="0" width="19" height="1" fill="#000000"/><rect x="0" y="1" width="1" height="1" fill="#000000"/><rect x="1" y="1" width="17" height="1" fill="#ffffff"/><rect x="18" y="1" width="1" height="1" fill="#000000"/><rect x="0" y="2" width="1" height="1" fill="#000000"/><rect x="1" y="2" width="3" height="1" fill="#ffffff"/><rect x="4" y="2" width="2" height="1" fill="#008000"/><rect x="6" y="2" width="7" height="1" fill="#ffffff"/><rect x="13" y="2" width="2" height="1" fill="#ff0000"/><rect x="15" y="2" width="3" height="1" fill="#ffffff"/><rect x="18" y="2" width="1" height="1" fill="#000000"/><rect x="0" y="3" width="1" height="1" fill="#000000"/><rect x="1" y="3" width="2" height="1" fill="#ffffff"/><rect x="3" y="3" width="4" height="1" fill="#008000"/><rect x="7" y="3" width="5" height="1" fill="#ffffff"/><rect x="12" y="3" width="4" height="1" fill="#ff0000"/><rect x="16" y="3" width="2" height="1" fill="#ffffff"/><rect x="18" y="3" width="1" height="1" fill="#000000"/><rect x="0" y="4" width="1" height="1" fill="#000000"/><rect x="1" y="4" width="1" height="1" fill="#ffffff"/><rect x="2" y="4" width="6" height="1" fill="#008000"/><rect x="8" y="4" width="3" height="1" fill="#ffffff"/><rect x="11" y="4" width="6" height="1" fill="#ff0000"/><rect x="17" y="4" width="1" height="1" fill="#ffffff"/><rect x="18" y="4" width="1" height="1" fill="#000000"/><rect x="0" y="5" width="1" height="1" fill="#000000"/><rect x="1" y="5" width="1" height="1" fill="#ffffff"/><rect x="2" y="5" width="6" height="1" fill="#008000"/><rect x="8" y="5" width="3" height="1" fill="#ffffff"/><rect x="11" y="5" width="6" height="1" fill="#ff0000"/><rect x="17" y="5" width="1" height="1" fill="#ffffff"/><rect x="18" y="5" width="1" height="1" fill="#000000"/><rect x="0" y="6" width="1" height="1" fill="#000000"/><rect x="1" y="6" width="2" height="1" fill="#ffffff"/><rect x="3" y="6" width="4" height="1" fill="#008000"/><rect x="7" y="6" width="5" height="1" fill="#ffffff"/><rect x="12" y="6" width="4" height="1" fill="#ff0000"/><rect x="16" y="6" width="2" height="1" fill="#ffffff"/><rect x="18" y="6" width="1" height="1" fill="#000000"/><rect x="0" y="7" width="1" height="1" fill="#000000"/><rect x="1" y="7" width="3" height="1" fill="#ffffff"/><rect x="4" y="7" width="2" height="1" fill="#008000"/><rect x="6" y="7" width="7" height="1" fill="#ffffff"/><rect x="13" y="7" width="2" height="1" fill="#ff0000"/><rect x="15" y="7" width="3" height="1" fill="#ffffff"/><rect x="18" y="7" width="1" height="1" fill="#000000"/><rect x="0" y="8" width="1" height="1" fill="#000000"/><rect x="1" y="8" width="17" height="1" fill="#ffffff"/><rect x="18" y="8" width="1" height="1" fill="#000000"/><rect x="0" y="9" width="19" height="1" fill="#000000"/></svg>
<div class="t" style="left:192.5px;top:252px;font-size:14px;line-height:18px;letter-spacing:-0.101px;color:#000;">ТС (однопоз.)</div>
<div class="t" style="left:286.4px;top:252px;font-size:14px;line-height:18px;letter-spacing:-0.924px;color:#000;">36 (1 :1 :6)</div>
<svg style="left:167px;top:274px" width="19" height="10" shape-rendering="crispEdges"><rect x="0" y="0" width="19" height="1" fill="#000000"/><rect x="0" y="1" width="1" height="1" fill="#000000"/><rect x="1" y="1" width="17" height="1" fill="#ffffff"/><rect x="18" y="1" width="1" height="1" fill="#000000"/><rect x="0" y="2" width="1" height="1" fill="#000000"/><rect x="1" y="2" width="3" height="1" fill="#ffffff"/><rect x="4" y="2" width="2" height="1" fill="#008000"/><rect x="6" y="2" width="7" height="1" fill="#ffffff"/><rect x="13" y="2" width="2" height="1" fill="#ff0000"/><rect x="15" y="2" width="3" height="1" fill="#ffffff"/><rect x="18" y="2" width="1" height="1" fill="#000000"/><rect x="0" y="3" width="1" height="1" fill="#000000"/><rect x="1" y="3" width="2" height="1" fill="#ffffff"/><rect x="3" y="3" width="4" height="1" fill="#008000"/><rect x="7" y="3" width="5" height="1" fill="#ffffff"/><rect x="12" y="3" width="4" height="1" fill="#ff0000"/><rect x="16" y="3" width="2" height="1" fill="#ffffff"/><rect x="18" y="3" width="1" height="1" fill="#000000"/><rect x="0" y="4" width="1" height="1" fill="#000000"/><rect x="1" y="4" width="1" height="1" fill="#ffffff"/><rect x="2" y="4" width="6" height="1" fill="#008000"/><rect x="8" y="4" width="3" height="1" fill="#ffffff"/><rect x="11" y="4" width="6" height="1" fill="#ff0000"/><rect x="17" y="4" width="1" height="1" fill="#ffffff"/><rect x="18" y="4" width="1" height="1" fill="#000000"/><rect x="0" y="5" width="1" height="1" fill="#000000"/><rect x="1" y="5" width="1" height="1" fill="#ffffff"/><rect x="2" y="5" width="6" height="1" fill="#008000"/><rect x="8" y="5" width="3" height="1" fill="#ffffff"/><rect x="11" y="5" width="6" height="1" fill="#ff0000"/><rect x="17" y="5" width="1" height="1" fill="#ffffff"/><rect x="18" y="5" width="1" height="1" fill="#000000"/><rect x="0" y="6" width="1" height="1" fill="#000000"/><rect x="1" y="6" width="2" height="1" fill="#ffffff"/><rect x="3" y="6" width="4" height="1" fill="#008000"/><rect x="7" y="6" width="5" height="1" fill="#ffffff"/><rect x="12" y="6" width="4" height="1" fill="#ff0000"/><rect x="16" y="6" width="2" height="1" fill="#ffffff"/><rect x="18" y="6" width="1" height="1" fill="#000000"/><rect x="0" y="7" width="1" height="1" fill="#000000"/><rect x="1" y="7" width="3" height="1" fill="#ffffff"/><rect x="4" y="7" width="2" height="1" fill="#008000"/><rect x="6" y="7" width="7" height="1" fill="#ffffff"/><rect x="13" y="7" width="2" height="1" fill="#ff0000"/><rect x="15" y="7" width="3" height="1" fill="#ffffff"/><rect x="18" y="7" width="1" height="1" fill="#000000"/><rect x="0" y="8" width="1" height="1" fill="#000000"/><rect x="1" y="8" width="17" height="1" fill="#ffffff"/><rect x="18" y="8" width="1" height="1" fill="#000000"/><rect x="0" y="9" width="19" height="1" fill="#000000"/></svg>
<div class="t" style="left:192.5px;top:270px;font-size:14px;line-height:18px;letter-spacing:-0.101px;color:#000;">ТС (однопоз.)</div>
<div class="t" style="left:286.4px;top:270px;font-size:14px;line-height:18px;letter-spacing:-0.924px;color:#000;">37 (1 :1 :7)</div>
<svg style="left:167px;top:292px" width="19" height="10" shape-rendering="crispEdges"><rect x="0" y="0" width="19" height="1" fill="#000000"/><rect x="0" y="1" width="1" height="1" fill="#000000"/><rect x="1" y="1" width="17" height="1" fill="#ffffff"/><rect x="18" y="1" width="1" height="1" fill="#000000"/><rect x="0" y="2" width="1" height="1" fill="#000000"/><rect x="1" y="2" width="3" height="1" fill="#ffffff"/><rect x="4" y="2" width="2" height="1" fill="#008000"/><rect x="6" y="2" width="7" height="1" fill="#ffffff"/><rect x="13" y="2" width="2" height="1" fill="#ff0000"/><rect x="15" y="2" width="3" height="1" fill="#ffffff"/><rect x="18" y="2" width="1" height="1" fill="#000000"/><rect x="0" y="3" width="1" height="1" fill="#000000"/><rect x="1" y="3" width="2" height="1" fill="#ffffff"/><rect x="3" y="3" width="4" height="1" fill="#008000"/><rect x="7" y="3" width="5" height="1" fill="#ffffff"/><rect x="12" y="3" width="4" height="1" fill="#ff0000"/><rect x="16" y="3" width="2" height="1" fill="#ffffff"/><rect x="18" y="3" width="1" height="1" fill="#000000"/><rect x="0" y="4" width="1" height="1" fill="#000000"/><rect x="1" y="4" width="1" height="1" fill="#ffffff"/><rect x="2" y="4" width="6" height="1" fill="#008000"/><rect x="8" y="4" width="3" height="1" fill="#ffffff"/><rect x="11" y="4" width="6" height="1" fill="#ff0000"/><rect x="17" y="4" width="1" height="1" fill="#ffffff"/><rect x="18" y="4" width="1" height="1" fill="#000000"/><rect x="0" y="5" width="1" height="1" fill="#000000"/><rect x="1" y="5" width="1" height="1" fill="#ffffff"/><rect x="2" y="5" width="6" height="1" fill="#008000"/><rect x="8" y="5" width="3" height="1" fill="#ffffff"/><rect x="11" y="5" width="6" height="1" fill="#ff0000"/><rect x="17" y="5" width="1" height="1" fill="#ffffff"/><rect x="18" y="5" width="1" height="1" fill="#000000"/><rect x="0" y="6" width="1" height="1" fill="#000000"/><rect x="1" y="6" width="2" height="1" fill="#ffffff"/><rect x="3" y="6" width="4" height="1" fill="#008000"/><rect x="7" y="6" width="5" height="1" fill="#ffffff"/><rect x="12" y="6" width="4" height="1" fill="#ff0000"/><rect x="16" y="6" width="2" height="1" fill="#ffffff"/><rect x="18" y="6" width="1" height="1" fill="#000000"/><rect x="0" y="7" width="1" height="1" fill="#000000"/><rect x="1" y="7" width="3" height="1" fill="#ffffff"/><rect x="4" y="7" width="2" height="1" fill="#008000"/><rect x="6" y="7" width="7" height="1" fill="#ffffff"/><rect x="13" y="7" width="2" height="1" fill="#ff0000"/><rect x="15" y="7" width="3" height="1" fill="#ffffff"/><rect x="18" y="7" width="1" height="1" fill="#000000"/><rect x="0" y="8" width="1" height="1" fill="#000000"/><rect x="1" y="8" width="17" height="1" fill="#ffffff"/><rect x="18" y="8" width="1" height="1" fill="#000000"/><rect x="0" y="9" width="19" height="1" fill="#000000"/></svg>
<div class="t" style="left:192.5px;top:288px;font-size:14px;line-height:18px;letter-spacing:-0.101px;color:#000;">ТС (однопоз.)</div>
<div class="t" style="left:286.4px;top:288px;font-size:14px;line-height:18px;letter-spacing:-0.924px;color:#000;">38 (1 :1 :8)</div>
<svg style="left:167px;top:310px" width="19" height="10" shape-rendering="crispEdges"><rect x="0" y="0" width="19" height="1" fill="#000000"/><rect x="0" y="1" width="1" height="1" fill="#000000"/><rect x="1" y="1" width="17" height="1" fill="#ffffff"/><rect x="18" y="1" width="1" height="1" fill="#000000"/><rect x="0" y="2" width="1" height="1" fill="#000000"/><rect x="1" y="2" width="3" height="1" fill="#ffffff"/><rect x="4" y="2" width="2" height="1" fill="#008000"/><rect x="6" y="2" width="7" height="1" fill="#ffffff"/><rect x="13" y="2" width="2" height="1" fill="#ff0000"/><rect x="15" y="2" width="3" height="1" fill="#ffffff"/><rect x="18" y="2" width="1" height="1" fill="#000000"/><rect x="0" y="3" width="1" height="1" fill="#000000"/><rect x="1" y="3" width="2" height="1" fill="#ffffff"/><rect x="3" y="3" width="4" height="1" fill="#008000"/><rect x="7" y="3" width="5" height="1" fill="#ffffff"/><rect x="12" y="3" width="4" height="1" fill="#ff0000"/><rect x="16" y="3" width="2" height="1" fill="#ffffff"/><rect x="18" y="3" width="1" height="1" fill="#000000"/><rect x="0" y="4" width="1" height="1" fill="#000000"/><rect x="1" y="4" width="1" height="1" fill="#ffffff"/><rect x="2" y="4" width="6" height="1" fill="#008000"/><rect x="8" y="4" width="3" height="1" fill="#ffffff"/><rect x="11" y="4" width="6" height="1" fill="#ff0000"/><rect x="17" y="4" width="1" height="1" fill="#ffffff"/><rect x="18" y="4" width="1" height="1" fill="#000000"/><rect x="0" y="5" width="1" height="1" fill="#000000"/><rect x="1" y="5" width="1" height="1" fill="#ffffff"/><rect x="2" y="5" width="6" height="1" fill="#008000"/><rect x="8" y="5" width="3" height="1" fill="#ffffff"/><rect x="11" y="5" width="6" height="1" fill="#ff0000"/><rect x="17" y="5" width="1" height="1" fill="#ffffff"/><rect x="18" y="5" width="1" height="1" fill="#000000"/><rect x="0" y="6" width="1" height="1" fill="#000000"/><rect x="1" y="6" width="2" height="1" fill="#ffffff"/><rect x="3" y="6" width="4" height="1" fill="#008000"/><rect x="7" y="6" width="5" height="1" fill="#ffffff"/><rect x="12" y="6" width="4" height="1" fill="#ff0000"/><rect x="16" y="6" width="2" height="1" fill="#ffffff"/><rect x="18" y="6" width="1" height="1" fill="#000000"/><rect x="0" y="7" width="1" height="1" fill="#000000"/><rect x="1" y="7" width="3" height="1" fill="#ffffff"/><rect x="4" y="7" width="2" height="1" fill="#008000"/><rect x="6" y="7" width="7" height="1" fill="#ffffff"/><rect x="13" y="7" width="2" height="1" fill="#ff0000"/><rect x="15" y="7" width="3" height="1" fill="#ffffff"/><rect x="18" y="7" width="1" height="1" fill="#000000"/><rect x="0" y="8" width="1" height="1" fill="#000000"/><rect x="1" y="8" width="17" height="1" fill="#ffffff"/><rect x="18" y="8" width="1" height="1" fill="#000000"/><rect x="0" y="9" width="19" height="1" fill="#000000"/></svg>
<div class="t" style="left:192.5px;top:306px;font-size:14px;line-height:18px;letter-spacing:-0.101px;color:#000;">ТС (однопоз.)</div>
<div class="t" style="left:286.4px;top:306px;font-size:14px;line-height:18px;letter-spacing:-0.924px;color:#000;">39 (1 :1 :9)</div>
<svg style="left:167px;top:328px" width="19" height="10" shape-rendering="crispEdges"><rect x="0" y="0" width="19" height="1" fill="#000000"/><rect x="0" y="1" width="1" height="1" fill="#000000"/><rect x="1" y="1" width="17" height="1" fill="#ffffff"/><rect x="18" y="1" width="1" height="1" fill="#000000"/><rect x="0" y="2" width="1" height="1" fill="#000000"/><rect x="1" y="2" width="3" height="1" fill="#ffffff"/><rect x="4" y="2" width="2" height="1" fill="#008000"/><rect x="6" y="2" width="7" height="1" fill="#ffffff"/><rect x="13" y="2" width="2" height="1" fill="#ff0000"/><rect x="15" y="2" width="3" height="1" fill="#ffffff"/><rect x="18" y="2" width="1" height="1" fill="#000000"/><rect x="0" y="3" width="1" height="1" fill="#000000"/><rect x="1" y="3" width="2" height="1" fill="#ffffff"/><rect x="3" y="3" width="4" height="1" fill="#008000"/><rect x="7" y="3" width="5" height="1" fill="#ffffff"/><rect x="12" y="3" width="4" height="1" fill="#ff0000"/><rect x="16" y="3" width="2" height="1" fill="#ffffff"/><rect x="18" y="3" width="1" height="1" fill="#000000"/><rect x="0" y="4" width="1" height="1" fill="#000000"/><rect x="1" y="4" width="1" height="1" fill="#ffffff"/><rect x="2" y="4" width="6" height="1" fill="#008000"/><rect x="8" y="4" width="3" height="1" fill="#ffffff"/><rect x="11" y="4" width="6" height="1" fill="#ff0000"/><rect x="17" y="4" width="1" height="1" fill="#ffffff"/><rect x="18" y="4" width="1" height="1" fill="#000000"/><rect x="0" y="5" width="1" height="1" fill="#000000"/><rect x="1" y="5" width="1" height="1" fill="#ffffff"/><rect x="2" y="5" width="6" height="1" fill="#008000"/><rect x="8" y="5" width="3" height="1" fill="#ffffff"/><rect x="11" y="5" width="6" height="1" fill="#ff0000"/><rect x="17" y="5" width="1" height="1" fill="#ffffff"/><rect x="18" y="5" width="1" height="1" fill="#000000"/><rect x="0" y="6" width="1" height="1" fill="#000000"/><rect x="1" y="6" width="2" height="1" fill="#ffffff"/><rect x="3" y="6" width="4" height="1" fill="#008000"/><rect x="7" y="6" width="5" height="1" fill="#ffffff"/><rect x="12" y="6" width="4" height="1" fill="#ff0000"/><rect x="16" y="6" width="2" height="1" fill="#ffffff"/><rect x="18" y="6" width="1" height="1" fill="#000000"/><rect x="0" y="7" width="1" height="1" fill="#000000"/><rect x="1" y="7" width="3" height="1" fill="#ffffff"/><rect x="4" y="7" width="2" height="1" fill="#008000"/><rect x="6" y="7" width="7" height="1" fill="#ffffff"/><rect x="13" y="7" width="2" height="1" fill="#ff0000"/><rect x="15" y="7" width="3" height="1" fill="#ffffff"/><rect x="18" y="7" width="1" height="1" fill="#000000"/><rect x="0" y="8" width="1" height="1" fill="#000000"/><rect x="1" y="8" width="17" height="1" fill="#ffffff"/><rect x="18" y="8" width="1" height="1" fill="#000000"/><rect x="0" y="9" width="19" height="1" fill="#000000"/></svg>
<div class="t" style="left:192.39999999999998px;top:324px;font-size:14px;line-height:18px;letter-spacing:-0.065px;color:#000;">ТС (двухпоз.)</div>
<svg style="left:149px;top:344px" width="18" height="10" shape-rendering="crispEdges"><rect x="7" y="0" width="4" height="1" fill="#000000"/><rect x="4" y="1" width="3" height="1" fill="#000000"/><rect x="11" y="1" width="3" height="1" fill="#000000"/><rect x="3" y="2" width="1" height="1" fill="#000000"/><rect x="5" y="2" width="1" height="1" fill="#0000ff"/><rect x="8" y="2" width="1" height="1" fill="#000000"/><rect x="11" y="2" width="1" height="1" fill="#000000"/><rect x="13" y="2" width="1" height="1" fill="#000000"/><rect x="6" y="3" width="1" height="1" fill="#0000ff"/><rect x="14" y="3" width="1" height="1" fill="#000000"/><rect x="2" y="4" width="2" height="1" fill="#000000"/><rect x="7" y="4" width="1" height="1" fill="#0000ff"/><rect x="12" y="4" width="1" height="1" fill="#000000"/><rect x="15" y="4" width="1" height="1" fill="#000000"/><rect x="1" y="5" width="1" height="1" fill="#000000"/><rect x="8" y="5" width="1" height="1" fill="#0000ff"/><rect x="16" y="5" width="1" height="1" fill="#000000"/><rect x="0" y="6" width="2" height="1" fill="#000000"/><rect x="9" y="6" width="1" height="1" fill="#0000ff"/><rect x="16" y="6" width="2" height="1" fill="#000000"/><rect x="0" y="7" width="1" height="1" fill="#000000"/><rect x="1" y="7" width="1" height="1" fill="#ffffff"/><rect x="2" y="7" width="16" height="1" fill="#000000"/><rect x="0" y="8" width="1" height="1" fill="#000000"/><rect x="1" y="8" width="6" height="1" fill="#ffffff"/><rect x="7" y="8" width="1" height="1" fill="#0000ff"/><rect x="8" y="8" width="7" height="1" fill="#ffffff"/><rect x="15" y="8" width="1" height="1" fill="#000000"/><rect x="0" y="9" width="16" height="1" fill="#000000"/></svg>
<div class="t" style="left:173.8px;top:342px;font-size:14px;line-height:18px;letter-spacing:0.147px;color:#000;">Группа ТИТ</div>
<svg style="left:148px;top:361px" width="20" height="13" shape-rendering="crispEdges"><rect x="2" y="0" width="18" height="1" fill="#ff00ff"/><rect x="2" y="1" width="1" height="1" fill="#ff00ff"/><rect x="3" y="1" width="16" height="1" fill="#ffffff"/><rect x="19" y="1" width="1" height="1" fill="#ff00ff"/><rect x="2" y="2" width="1" height="1" fill="#ff00ff"/><rect x="3" y="2" width="2" height="1" fill="#ffffff"/><rect x="5" y="2" width="1" height="1" fill="#000000"/><rect x="6" y="2" width="3" height="1" fill="#ffffff"/><rect x="9" y="2" width="3" height="1" fill="#000000"/><rect x="12" y="2" width="2" height="1" fill="#ffffff"/><rect x="14" y="2" width="3" height="1" fill="#000000"/><rect x="17" y="2" width="2" height="1" fill="#ffffff"/><rect x="19" y="2" width="1" height="1" fill="#ff00ff"/><rect x="2" y="3" width="1" height="1" fill="#ff00ff"/><rect x="3" y="3" width="1" height="1" fill="#ffffff"/><rect x="4" y="3" width="2" height="1" fill="#000000"/><rect x="6" y="3" width="2" height="1" fill="#ffffff"/><rect x="8" y="3" width="1" height="1" fill="#000000"/><rect x="9" y="3" width="3" height="1" fill="#ffffff"/><rect x="12" y="3" width="1" height="1" fill="#000000"/><rect x="13" y="3" width="4" height="1" fill="#ffffff"/><rect x="17" y="3" width="1" height="1" fill="#000000"/><rect x="18" y="3" width="1" height="1" fill="#ffffff"/><rect x="19" y="3" width="1" height="1" fill="#ff00ff"/><rect x="0" y="4" width="3" height="1" fill="#ff00ff"/><rect x="3" y="4" width="2" height="1" fill="#ffffff"/><rect x="5" y="4" width="1" height="1" fill="#000000"/><rect x="6" y="4" width="5" height="1" fill="#ffffff"/><rect x="11" y="4" width="1" height="1" fill="#000000"/><rect x="12" y="4" width="3" height="1" fill="#ffffff"/><rect x="15" y="4" width="2" height="1" fill="#000000"/><rect x="17" y="4" width="2" height="1" fill="#ffffff"/><rect x="19" y="4" width="1" height="1" fill="#ff00ff"/><rect x="0" y="5" width="1" height="1" fill="#ff00ff"/><rect x="1" y="5" width="1" height="1" fill="#ffffff"/><rect x="2" y="5" width="1" height="1" fill="#ff00ff"/><rect x="3" y="5" width="2" height="1" fill="#ffffff"/><rect x="5" y="5" width="1" height="1" fill="#000000"/><rect x="6" y="5" width="4" height="1" fill="#ffffff"/><rect x="10" y="5" width="1" height="1" fill="#000000"/><rect x="11" y="5" width="6" height="1" fill="#ffffff"/><rect x="17" y="5" width="1" height="1" fill="#000000"/><rect x="18" y="5" width="1" height="1" fill="#ffffff"/><rect x="19" y="5" width="1" height="1" fill="#ff00ff"/><rect x="0" y="6" width="1" height="1" fill="#ff00ff"/><rect x="1" y="6" width="1" height="1" fill="#ffffff"/><rect x="2" y="6" width="1" height="1" fill="#ff00ff"/><rect x="3" y="6" width="2" height="1" fill="#ffffff"/><rect x="5" y="6" width="1" height="1" fill="#000000"/><rect x="6" y="6" width="3" height="1" fill="#ffffff"/><rect x="9" y="6" width="1" height="1" fill="#000000"/><rect x="10" y="6" width="4" height="1" fill="#ffffff"/><rect x="14" y="6" width="1" height="1" fill="#000000"/><rect x="15" y="6" width="2" height="1" fill="#ffffff"/><rect x="17" y="6" width="1" height="1" fill="#000000"/><rect x="18" y="6" width="1" height="1" fill="#ffffff"/><rect x="19" y="6" width="1" height="1" fill="#ff00ff"/><rect x="0" y="7" width="1" height="1" fill="#ff00ff"/><rect x="1" y="7" width="1" height="1" fill="#ffffff"/><rect x="2" y="7" width="1" height="1" fill="#ff00ff"/><rect x="3" y="7" width="1" height="1" fill="#ffffff"/><rect x="4" y="7" width="3" height="1" fill="#000000"/><rect x="7" y="7" width="1" height="1" fill="#ffffff"/><rect x="8" y="7" width="5" height="1" fill="#000000"/><rect x="13" y="7" width="2" height="1" fill="#ffffff"/><rect x="15" y="7" width="2" height="1" fill="#000000"/><rect x="17" y="7" width="2" height="1" fill="#ffffff"/><rect x="19" y="7" width="1" height="1" fill="#ff00ff"/><rect x="0" y="8" width="1" height="1" fill="#ff00ff"/><rect x="1" y="8" width="1" height="1" fill="#ffffff"/><rect x="2" y="8" width="1" height="1" fill="#ff00ff"/><rect x="3" y="8" width="16" height="1" fill="#ffffff"/><rect x="19" y="8" width="1" height="1" fill="#ff00ff"/><rect x="0" y="9" width="1" height="1" fill="#ff00ff"/><rect x="1" y="9" width="1" height="1" fill="#ffffff"/><rect x="2" y="9" width="18" height="1" fill="#ff00ff"/><rect x="0" y="10" width="1" height="1" fill="#ff00ff"/><rect x="1" y="10" width="2" height="1" fill="#ffffff"/><rect x="3" y="10" width="2" height="1" fill="#000000"/><rect x="5" y="10" width="2" height="1" fill="#ffffff"/><rect x="7" y="10" width="3" height="1" fill="#000000"/><rect x="10" y="10" width="3" height="1" fill="#ffffff"/><rect x="13" y="10" width="1" height="1" fill="#000000"/><rect x="14" y="10" width="3" height="1" fill="#ffffff"/><rect x="17" y="10" width="1" height="1" fill="#ff00ff"/><rect x="0" y="11" width="1" height="1" fill="#ff00ff"/><rect x="1" y="11" width="16" height="1" fill="#ffffff"/><rect x="17" y="11" width="1" height="1" fill="#ff00ff"/><rect x="0" y="12" width="18" height="1" fill="#ff00ff"/></svg>
<div class="t" style="left:173.8px;top:360px;font-size:14px;line-height:18px;letter-spacing:0.418px;color:#000;">Группа счетчиков</div>
<svg style="left:149px;top:378px" width="18" height="17" shape-rendering="crispEdges"><rect x="3" y="0" width="5" height="1" fill="#000000"/><rect x="10" y="0" width="6" height="1" fill="#000000"/><rect x="2" y="1" width="1" height="1" fill="#000000"/><rect x="3" y="1" width="4" height="1" fill="#ffffff"/><rect x="7" y="1" width="1" height="1" fill="#000000"/><rect x="8" y="1" width="1" height="1" fill="#808080"/><rect x="9" y="1" width="1" height="1" fill="#000000"/><rect x="10" y="1" width="5" height="1" fill="#ffffff"/><rect x="15" y="1" width="2" height="1" fill="#000000"/><rect x="1" y="2" width="1" height="1" fill="#000000"/><rect x="2" y="2" width="4" height="1" fill="#ffffff"/><rect x="6" y="2" width="1" height="1" fill="#000000"/><rect x="7" y="2" width="1" height="1" fill="#808080"/><rect x="8" y="2" width="1" height="1" fill="#000000"/><rect x="9" y="2" width="5" height="1" fill="#ffffff"/><rect x="14" y="2" width="1" height="1" fill="#000000"/><rect x="15" y="2" width="1" height="1" fill="#808080"/><rect x="16" y="2" width="1" height="1" fill="#000000"/><rect x="0" y="3" width="1" height="1" fill="#000000"/><rect x="1" y="3" width="4" height="1" fill="#ffffff"/><rect x="5" y="3" width="1" height="1" fill="#000000"/><rect x="6" y="3" width="1" height="1" fill="#a0a0a0"/><rect x="7" y="3" width="1" height="1" fill="#808080"/><rect x="8" y="3" width="1" height="1" fill="#000000"/><rect x="9" y="3" width="4" height="1" fill="#ffffff"/><rect x="13" y="3" width="1" height="1" fill="#000000"/><rect x="14" y="3" width="1" height="1" fill="#a0a0a0"/><rect x="15" y="3" width="1" height="1" fill="#808080"/><rect x="16" y="3" width="1" height="1" fill="#000000"/><rect x="0" y="4" width="6" height="1" fill="#000000"/><rect x="6" y="4" width="1" height="1" fill="#a0a0a0"/><rect x="7" y="4" width="1" height="1" fill="#808080"/><rect x="8" y="4" width="6" height="1" fill="#000000"/><rect x="14" y="4" width="1" height="1" fill="#a0a0a0"/><rect x="15" y="4" width="1" height="1" fill="#808080"/><rect x="16" y="4" width="1" height="1" fill="#000000"/><rect x="0" y="5" width="1" height="1" fill="#000000"/><rect x="1" y="5" width="4" height="1" fill="#ffffff"/><rect x="5" y="5" width="1" height="1" fill="#000000"/><rect x="6" y="5" width="1" height="1" fill="#a0a0a0"/><rect x="7" y="5" width="1" height="1" fill="#808080"/><rect x="8" y="5" width="1" height="1" fill="#000000"/><rect x="9" y="5" width="4" height="1" fill="#ffffff"/><rect x="13" y="5" width="1" height="1" fill="#000000"/><rect x="14" y="5" width="1" height="1" fill="#a0a0a0"/><rect x="15" y="5" width="1" height="1" fill="#808080"/><rect x="16" y="5" width="1" height="1" fill="#000000"/><rect x="0" y="6" width="2" height="1" fill="#000000"/><rect x="2" y="6" width="4" height="1" fill="#ffffff"/><rect x="6" y="6" width="1" height="1" fill="#000000"/><rect x="7" y="6" width="1" height="1" fill="#808080"/><rect x="8" y="6" width="2" height="1" fill="#000000"/><rect x="10" y="6" width="4" height="1" fill="#ffffff"/><rect x="14" y="6" width="1" height="1" fill="#000000"/><rect x="15" y="6" width="1" height="1" fill="#808080"/><rect x="16" y="6" width="1" height="1" fill="#000000"/><rect x="1" y="7" width="1" height="1" fill="#000000"/><rect x="2" y="7" width="4" height="1" fill="#ffffff"/><rect x="6" y="7" width="1" height="1" fill="#000000"/><rect x="7" y="7" width="1" height="1" fill="#808080"/><rect x="8" y="7" width="1" height="1" fill="#000000"/><rect x="10" y="7" width="1" height="1" fill="#000000"/><rect x="11" y="7" width="3" height="1" fill="#ffffff"/><rect x="14" y="7" width="1" height="1" fill="#000000"/><rect x="15" y="7" width="1" height="1" fill="#808080"/><rect x="16" y="7" width="1" height="1" fill="#000000"/><rect x="1" y="8" width="6" height="1" fill="#000000"/><rect x="7" y="8" width="1" height="1" fill="#808080"/><rect x="8" y="8" width="1" height="1" fill="#000000"/><rect x="10" y="8" width="5" height="1" fill="#000000"/><rect x="15" y="8" width="1" height="1" fill="#808080"/><rect x="16" y="8" width="1" height="1" fill="#000000"/><rect x="1" y="9" width="1" height="1" fill="#000000"/><rect x="2" y="9" width="5" height="1" fill="#ffffff"/><rect x="7" y="9" width="1" height="1" fill="#808080"/><rect x="8" y="9" width="1" height="1" fill="#000000"/><rect x="9" y="9" width="5" height="1" fill="#ffffff"/><rect x="14" y="9" width="1" height="1" fill="#000000"/><rect x="15" y="9" width="1" height="1" fill="#808080"/><rect x="16" y="9" width="1" height="1" fill="#000000"/><rect x="1" y="10" width="1" height="1" fill="#000000"/><rect x="2" y="10" width="1" height="1" fill="#ffffff"/><rect x="3" y="10" width="3" height="1" fill="#000000"/><rect x="6" y="10" width="1" height="1" fill="#ffffff"/><rect x="7" y="10" width="1" height="1" fill="#808080"/><rect x="8" y="10" width="1" height="1" fill="#000000"/><rect x="9" y="10" width="1" height="1" fill="#ffffff"/><rect x="10" y="10" width="3" height="1" fill="#000000"/><rect x="13" y="10" width="1" height="1" fill="#ffffff"/><rect x="14" y="10" width="1" height="1" fill="#000000"/><rect x="15" y="10" width="1" height="1" fill="#808080"/><rect x="16" y="10" width="1" height="1" fill="#000000"/><rect x="1" y="11" width="1" height="1" fill="#000000"/><rect x="2" y="11" width="1" height="1" fill="#ffffff"/><rect x="3" y="11" width="1" height="1" fill="#000000"/><rect x="4" y="11" width="1" height="1" fill="#ff0000"/><rect x="5" y="11" width="1" height="1" fill="#000000"/><rect x="6" y="11" width="1" height="1" fill="#ffffff"/><rect x="7" y="11" width="1" height="1" fill="#808080"/><rect x="8" y="11" width="1" height="1" fill="#000000"/><rect x="9" y="11" width="1" height="1" fill="#ffffff"/><rect x="10" y="11" width="1" height="1" fill="#000000"/><rect x="11" y="11" width="1" height="1" fill="#ff0000"/><rect x="12" y="11" width="1" height="1" fill="#000000"/><rect x="13" y="11" width="1" height="1" fill="#ffffff"/><rect x="14" y="11" width="1" height="1" fill="#000000"/><rect x="15" y="11" width="1" height="1" fill="#808080"/><rect x="16" y="11" width="1" height="1" fill="#000000"/><rect x="1" y="12" width="1" height="1" fill="#000000"/><rect x="2" y="12" width="1" height="1" fill="#ffffff"/><rect x="3" y="12" width="3" height="1" fill="#000000"/><rect x="6" y="12" width="1" height="1" fill="#ffffff"/><rect x="7" y="12" width="1" height="1" fill="#808080"/><rect x="8" y="12" width="1" height="1" fill="#000000"/><rect x="9" y="12" width="1" height="1" fill="#ffffff"/><rect x="10" y="12" width="3" height="1" fill="#000000"/><rect x="13" y="12" width="1" height="1" fill="#ffffff"/><rect x="14" y="12" width="1" height="1" fill="#000000"/><rect x="15" y="12" width="1" height="1" fill="#808080"/><rect x="16" y="12" width="1" height="1" fill="#000000"/><rect x="1" y="13" width="1" height="1" fill="#000000"/><rect x="2" y="13" width="5" height="1" fill="#ffffff"/><rect x="7" y="13" width="1" height="1" fill="#808080"/><rect x="8" y="13" width="1" height="1" fill="#000000"/><rect x="9" y="13" width="5" height="1" fill="#ffffff"/><rect x="14" y="13" width="1" height="1" fill="#000000"/><rect x="15" y="13" width="1" height="1" fill="#808080"/><rect x="16" y="13" width="1" height="1" fill="#000000"/><rect x="1" y="14" width="6" height="1" fill="#000000"/><rect x="7" y="14" width="1" height="1" fill="#808080"/><rect x="8" y="14" width="7" height="1" fill="#000000"/><rect x="15" y="14" width="1" height="1" fill="#808080"/><rect x="16" y="14" width="1" height="1" fill="#000000"/><rect x="1" y="15" width="2" height="1" fill="#000000"/><rect x="3" y="15" width="5" height="1" fill="#808080"/><rect x="8" y="15" width="2" height="1" fill="#000000"/><rect x="10" y="15" width="6" height="1" fill="#808080"/><rect x="16" y="15" width="1" height="1" fill="#000000"/><rect x="1" y="16" width="16" height="1" fill="#000000"/></svg>
<div class="t" style="left:173.8px;top:378px;font-size:14px;line-height:18px;letter-spacing:0.091px;color:#000;">Группа ТУ (прием)</div>
<svg style="left:58px;top:395px" width="11" height="7" shape-rendering="crispEdges"><rect x="0" y="0" width="1" height="1" fill="#000000"/><rect x="2" y="0" width="1" height="1" fill="#000000"/><rect x="4" y="0" width="2" height="1" fill="#000000"/><rect x="8" y="0" width="2" height="1" fill="#000000"/><rect x="0" y="1" width="1" height="1" fill="#000000"/><rect x="2" y="1" width="1" height="1" fill="#000000"/><rect x="4" y="1" width="1" height="1" fill="#000000"/><rect x="6" y="1" width="1" height="1" fill="#000000"/><rect x="8" y="1" width="1" height="1" fill="#000000"/><rect x="10" y="1" width="1" height="1" fill="#000000"/><rect x="0" y="2" width="1" height="1" fill="#000000"/><rect x="2" y="2" width="1" height="1" fill="#000000"/><rect x="4" y="2" width="1" height="1" fill="#000000"/><rect x="6" y="2" width="1" height="1" fill="#000000"/><rect x="8" y="2" width="1" height="1" fill="#000000"/><rect x="10" y="2" width="1" height="1" fill="#000000"/><rect x="0" y="3" width="1" height="1" fill="#000000"/><rect x="2" y="3" width="1" height="1" fill="#000000"/><rect x="4" y="3" width="1" height="1" fill="#000000"/><rect x="6" y="3" width="1" height="1" fill="#000000"/><rect x="8" y="3" width="2" height="1" fill="#000000"/><rect x="0" y="4" width="1" height="1" fill="#000000"/><rect x="2" y="4" width="1" height="1" fill="#000000"/><rect x="4" y="4" width="1" height="1" fill="#000000"/><rect x="6" y="4" width="1" height="1" fill="#000000"/><rect x="8" y="4" width="1" height="1" fill="#000000"/><rect x="0" y="5" width="1" height="1" fill="#000000"/><rect x="2" y="5" width="1" height="1" fill="#000000"/><rect x="4" y="5" width="1" height="1" fill="#000000"/><rect x="6" y="5" width="1" height="1" fill="#000000"/><rect x="8" y="5" width="1" height="1" fill="#000000"/><rect x="1" y="6" width="1" height="1" fill="#000000"/><rect x="4" y="6" width="2" height="1" fill="#000000"/><rect x="8" y="6" width="1" height="1" fill="#000000"/></svg>
<svg style="left:61px;top:400px" width="16" height="15" shape-rendering="crispEdges"><rect x="9" y="0" width="1" height="1" fill="#000000"/><rect x="11" y="0" width="1" height="1" fill="#000000"/><rect x="9" y="1" width="1" height="1" fill="#000000"/><rect x="11" y="1" width="1" height="1" fill="#000000"/><rect x="8" y="2" width="1" height="1" fill="#000000"/><rect x="9" y="2" width="2" height="1" fill="#00ffff"/><rect x="11" y="2" width="1" height="1" fill="#0000ff"/><rect x="12" y="2" width="1" height="1" fill="#000000"/><rect x="8" y="3" width="2" height="1" fill="#000000"/><rect x="11" y="3" width="2" height="1" fill="#000000"/><rect x="9" y="4" width="1" height="1" fill="#000000"/><rect x="11" y="4" width="1" height="1" fill="#000000"/><rect x="8" y="5" width="1" height="1" fill="#000000"/><rect x="10" y="5" width="1" height="1" fill="#000000"/><rect x="12" y="5" width="1" height="1" fill="#000000"/><rect x="0" y="6" width="4" height="1" fill="#000000"/><rect x="7" y="6" width="1" height="1" fill="#000000"/><rect x="9" y="6" width="1" height="1" fill="#000000"/><rect x="13" y="6" width="3" height="1" fill="#000000"/><rect x="4" y="7" width="1" height="1" fill="#000000"/><rect x="6" y="7" width="1" height="1" fill="#000000"/><rect x="8" y="7" width="1" height="1" fill="#000000"/><rect x="12" y="7" width="1" height="1" fill="#000000"/><rect x="0" y="8" width="3" height="1" fill="#000000"/><rect x="5" y="8" width="1" height="1" fill="#000000"/><rect x="7" y="8" width="1" height="1" fill="#000000"/><rect x="12" y="8" width="4" height="1" fill="#000000"/><rect x="3" y="9" width="1" height="1" fill="#000000"/><rect x="6" y="9" width="1" height="1" fill="#000000"/><rect x="4" y="10" width="1" height="1" fill="#000000"/><rect x="6" y="10" width="1" height="1" fill="#000000"/><rect x="4" y="11" width="1" height="1" fill="#000000"/><rect x="6" y="11" width="1" height="1" fill="#000000"/><rect x="3" y="12" width="1" height="1" fill="#000000"/><rect x="4" y="12" width="2" height="1" fill="#00ffff"/><rect x="6" y="12" width="1" height="1" fill="#0000ff"/><rect x="7" y="12" width="1" height="1" fill="#000000"/><rect x="3" y="13" width="2" height="1" fill="#000000"/><rect x="6" y="13" width="2" height="1" fill="#000000"/><rect x="4" y="14" width="1" height="1" fill="#000000"/><rect x="6" y="14" width="1" height="1" fill="#000000"/></svg>
<div class="t" style="left:83.30000000000001px;top:396px;font-size:14px;line-height:18px;letter-spacing:0.265px;color:#000;">Протокол UDP</div>
<svg style="left:42px;top:416px" width="16" height="15" shape-rendering="crispEdges"><rect x="9" y="0" width="1" height="1" fill="#000000"/><rect x="11" y="0" width="1" height="1" fill="#000000"/><rect x="9" y="1" width="1" height="1" fill="#000000"/><rect x="11" y="1" width="1" height="1" fill="#000000"/><rect x="8" y="2" width="1" height="1" fill="#000000"/><rect x="9" y="2" width="2" height="1" fill="#00ffff"/><rect x="11" y="2" width="1" height="1" fill="#0000ff"/><rect x="12" y="2" width="1" height="1" fill="#000000"/><rect x="8" y="3" width="2" height="1" fill="#000000"/><rect x="11" y="3" width="2" height="1" fill="#000000"/><rect x="9" y="4" width="1" height="1" fill="#000000"/><rect x="11" y="4" width="1" height="1" fill="#000000"/><rect x="8" y="5" width="1" height="1" fill="#000000"/><rect x="10" y="5" width="1" height="1" fill="#000000"/><rect x="12" y="5" width="1" height="1" fill="#000000"/><rect x="0" y="6" width="4" height="1" fill="#000000"/><rect x="7" y="6" width="1" height="1" fill="#000000"/><rect x="9" y="6" width="1" height="1" fill="#000000"/><rect x="13" y="6" width="3" height="1" fill="#000000"/><rect x="4" y="7" width="1" height="1" fill="#000000"/><rect x="6" y="7" width="1" height="1" fill="#000000"/><rect x="8" y="7" width="1" height="1" fill="#000000"/><rect x="12" y="7" width="1" height="1" fill="#000000"/><rect x="0" y="8" width="3" height="1" fill="#000000"/><rect x="5" y="8" width="1" height="1" fill="#000000"/><rect x="7" y="8" width="1" height="1" fill="#000000"/><rect x="12" y="8" width="4" height="1" fill="#000000"/><rect x="3" y="9" width="1" height="1" fill="#000000"/><rect x="6" y="9" width="1" height="1" fill="#000000"/><rect x="4" y="10" width="1" height="1" fill="#000000"/><rect x="6" y="10" width="1" height="1" fill="#000000"/><rect x="4" y="11" width="1" height="1" fill="#000000"/><rect x="6" y="11" width="1" height="1" fill="#000000"/><rect x="3" y="12" width="1" height="1" fill="#000000"/><rect x="4" y="12" width="2" height="1" fill="#00ffff"/><rect x="6" y="12" width="1" height="1" fill="#0000ff"/><rect x="7" y="12" width="1" height="1" fill="#000000"/><rect x="3" y="13" width="2" height="1" fill="#000000"/><rect x="6" y="13" width="2" height="1" fill="#000000"/><rect x="4" y="14" width="1" height="1" fill="#000000"/><rect x="6" y="14" width="1" height="1" fill="#000000"/></svg>
<div class="t" style="left:65.9px;top:414px;font-size:14px;line-height:18px;letter-spacing:0.02px;color:#000;">Драйвер UDP</div>
<svg style="left:38px;top:433px" width="22" height="15" shape-rendering="crispEdges"><rect x="13" y="2" width="6" height="1" fill="#000000"/><rect x="3" y="3" width="5" height="1" fill="#ffff00"/><rect x="13" y="3" width="1" height="1" fill="#000000"/><rect x="18" y="3" width="1" height="1" fill="#000000"/><rect x="3" y="4" width="5" height="1" fill="#000080"/><rect x="13" y="4" width="1" height="1" fill="#000000"/><rect x="18" y="4" width="1" height="1" fill="#000000"/><rect x="2" y="5" width="1" height="1" fill="#000000"/><rect x="3" y="5" width="5" height="1" fill="#c0c0c0"/><rect x="8" y="5" width="1" height="1" fill="#000000"/><rect x="12" y="5" width="2" height="1" fill="#000000"/><rect x="16" y="5" width="5" height="1" fill="#000000"/><rect x="2" y="6" width="1" height="1" fill="#000000"/><rect x="3" y="6" width="1" height="1" fill="#c0c0c0"/><rect x="4" y="6" width="3" height="1" fill="#808080"/><rect x="7" y="6" width="1" height="1" fill="#c0c0c0"/><rect x="8" y="6" width="1" height="1" fill="#000000"/><rect x="12" y="6" width="1" height="1" fill="#000000"/><rect x="15" y="6" width="1" height="1" fill="#000000"/><rect x="16" y="6" width="5" height="1" fill="#c0c0c0"/><rect x="21" y="6" width="1" height="1" fill="#000000"/><rect x="2" y="7" width="1" height="1" fill="#000000"/><rect x="3" y="7" width="5" height="1" fill="#c0c0c0"/><rect x="8" y="7" width="1" height="1" fill="#000000"/><rect x="11" y="7" width="2" height="1" fill="#000000"/><rect x="15" y="7" width="1" height="1" fill="#000000"/><rect x="16" y="7" width="5" height="1" fill="#c0c0c0"/><rect x="21" y="7" width="1" height="1" fill="#000000"/><rect x="2" y="8" width="1" height="1" fill="#000000"/><rect x="3" y="8" width="5" height="1" fill="#c0c0c0"/><rect x="8" y="8" width="1" height="1" fill="#000000"/><rect x="10" y="8" width="2" height="1" fill="#000000"/><rect x="15" y="8" width="1" height="1" fill="#000000"/><rect x="16" y="8" width="5" height="1" fill="#c0c0c0"/><rect x="21" y="8" width="1" height="1" fill="#000000"/><rect x="2" y="9" width="1" height="1" fill="#000000"/><rect x="3" y="9" width="5" height="1" fill="#c0c0c0"/><rect x="8" y="9" width="1" height="1" fill="#000000"/><rect x="10" y="9" width="1" height="1" fill="#000000"/><rect x="15" y="9" width="1" height="1" fill="#000000"/><rect x="16" y="9" width="5" height="1" fill="#c0c0c0"/><rect x="21" y="9" width="1" height="1" fill="#000000"/><rect x="3" y="10" width="5" height="1" fill="#000000"/><rect x="10" y="10" width="1" height="1" fill="#000000"/><rect x="15" y="10" width="1" height="1" fill="#000000"/><rect x="16" y="10" width="1" height="1" fill="#c0c0c0"/><rect x="17" y="10" width="3" height="1" fill="#808080"/><rect x="20" y="10" width="1" height="1" fill="#c0c0c0"/><rect x="21" y="10" width="1" height="1" fill="#000000"/><rect x="5" y="11" width="1" height="1" fill="#000000"/><rect x="10" y="11" width="1" height="1" fill="#000000"/><rect x="15" y="11" width="1" height="1" fill="#000000"/><rect x="16" y="11" width="5" height="1" fill="#c0c0c0"/><rect x="21" y="11" width="1" height="1" fill="#000000"/><rect x="5" y="12" width="1" height="1" fill="#000000"/><rect x="9" y="12" width="2" height="1" fill="#000000"/><rect x="16" y="12" width="5" height="1" fill="#000080"/><rect x="5" y="13" width="6" height="1" fill="#000000"/><rect x="16" y="13" width="5" height="1" fill="#ffff00"/><rect x="6" y="14" width="4" height="1" fill="#000000"/></svg>
<div class="t" style="left:65.9px;top:432px;font-size:14px;line-height:18px;letter-spacing:-0.006px;color:#000;">Драйвер COM-портов</div>
<svg style="left:42px;top:452px" width="16" height="15" shape-rendering="crispEdges"><rect x="9" y="0" width="1" height="1" fill="#000000"/><rect x="11" y="0" width="1" height="1" fill="#000000"/><rect x="9" y="1" width="1" height="1" fill="#000000"/><rect x="11" y="1" width="1" height="1" fill="#000000"/><rect x="8" y="2" width="1" height="1" fill="#000000"/><rect x="9" y="2" width="2" height="1" fill="#00ffff"/><rect x="11" y="2" width="1" height="1" fill="#0000ff"/><rect x="12" y="2" width="1" height="1" fill="#000000"/><rect x="8" y="3" width="2" height="1" fill="#000000"/><rect x="11" y="3" width="2" height="1" fill="#000000"/><rect x="9" y="4" width="1" height="1" fill="#000000"/><rect x="11" y="4" width="1" height="1" fill="#000000"/><rect x="8" y="5" width="1" height="1" fill="#000000"/><rect x="10" y="5" width="1" height="1" fill="#000000"/><rect x="12" y="5" width="1" height="1" fill="#000000"/><rect x="0" y="6" width="4" height="1" fill="#000000"/><rect x="7" y="6" width="1" height="1" fill="#000000"/><rect x="9" y="6" width="1" height="1" fill="#000000"/><rect x="13" y="6" width="3" height="1" fill="#000000"/><rect x="4" y="7" width="1" height="1" fill="#000000"/><rect x="6" y="7" width="1" height="1" fill="#000000"/><rect x="8" y="7" width="1" height="1" fill="#000000"/><rect x="12" y="7" width="1" height="1" fill="#000000"/><rect x="0" y="8" width="3" height="1" fill="#000000"/><rect x="5" y="8" width="1" height="1" fill="#000000"/><rect x="7" y="8" width="1" height="1" fill="#000000"/><rect x="12" y="8" width="4" height="1" fill="#000000"/><rect x="3" y="9" width="1" height="1" fill="#000000"/><rect x="6" y="9" width="1" height="1" fill="#000000"/><rect x="4" y="10" width="1" height="1" fill="#000000"/><rect x="6" y="10" width="1" height="1" fill="#000000"/><rect x="4" y="11" width="1" height="1" fill="#000000"/><rect x="6" y="11" width="1" height="1" fill="#000000"/><rect x="3" y="12" width="1" height="1" fill="#000000"/><rect x="4" y="12" width="2" height="1" fill="#00ffff"/><rect x="6" y="12" width="1" height="1" fill="#0000ff"/><rect x="7" y="12" width="1" height="1" fill="#000000"/><rect x="3" y="13" width="2" height="1" fill="#000000"/><rect x="6" y="13" width="2" height="1" fill="#000000"/><rect x="4" y="14" width="1" height="1" fill="#000000"/><rect x="6" y="14" width="1" height="1" fill="#000000"/></svg>
<div class="t" style="left:64.9px;top:450px;font-size:14px;line-height:18px;letter-spacing:-0.042px;color:#000;">Пакетный драйвер Ethernet</div>
<div class="t" style="left:247.89999999999998px;top:450px;font-size:14px;line-height:18px;letter-spacing:-0.898px;color:#000;">(31)</div>
</div>
<div style="position:absolute;left:8px;top:632px;width:399px;height:16px;background:#f0f0f0;"></div>
<svg style="left:301px;top:632px" width="89" height="16"><defs><pattern id="dith" width="2" height="2" patternUnits="userSpaceOnUse"><rect width="2" height="2" fill="#f0f0f0"/><rect width="1" height="1" fill="#ffffff"/><rect x="1" y="1" width="1" height="1" fill="#ffffff"/></pattern></defs><rect width="89" height="16" fill="url(#dith)"/></svg>
<div style="position:absolute;left:25px;top:632px;width:276px;height:16px;background:#f0f0f0;border-top:1px solid #e3e3e3;border-left:1px solid #e3e3e3;border-right:1px solid #696969;border-bottom:1px solid #696969;"></div>
<div style="position:absolute;left:26px;top:633px;width:273px;height:1px;background:#ffffff;"></div>
<div style="position:absolute;left:26px;top:633px;width:1px;height:13px;background:#ffffff;"></div>
<div style="position:absolute;left:299px;top:633px;width:1px;height:14px;background:#a0a0a0;"></div>
<div style="position:absolute;left:26px;top:646px;width:274px;height:1px;background:#a0a0a0;"></div>
<svg style="left:8px;top:632px" width="17" height="16"><path d="M10.5 4.5 L6.5 8 L10.5 11.5" fill="none" stroke="#606060" stroke-width="2"/></svg>
<svg style="left:390px;top:632px" width="17" height="16"><path d="M6.5 4.5 L10.5 8 L6.5 11.5" fill="none" stroke="#606060" stroke-width="2"/></svg>
<div style="position:absolute;left:414px;top:31px;width:2px;height:624px;background:#ffffff;"></div>
<div style="position:absolute;left:416px;top:31px;width:1px;height:624px;background:#a0a0a0;"></div>
<div style="position:absolute;left:417px;top:31px;width:1px;height:624px;background:#b4b4b4;"></div>
<div style="position:absolute;left:418px;top:51px;width:469px;height:604px;background:#f0f0f0;border-top:1px solid #fff;border-left:1px solid #fff;border-right:1px solid #696969;border-bottom:1px solid #696969;"></div>
<div style="position:absolute;left:419px;top:52px;width:467px;height:1px;background:#e3e3e3;"></div>
<div style="position:absolute;left:419px;top:52px;width:1px;height:602px;background:#e3e3e3;"></div>
<div style="position:absolute;left:885px;top:52px;width:1px;height:602px;background:#a0a0a0;"></div>
<div style="position:absolute;left:419px;top:653px;width:467px;height:1px;background:#a0a0a0;"></div>
<div style="position:absolute;left:421px;top:54px;width:462px;height:1px;background:#f8f8f8;"></div>
<div style="position:absolute;left:421px;top:54px;width:1px;height:597px;background:#f8f8f8;"></div>
<div style="position:absolute;left:418px;top:32px;width:190px;height:21px;background:#f0f0f0;border-top:1px solid #fff;border-left:1px solid #fff;border-right:1px solid #696969;"></div>
<div style="position:absolute;left:419px;top:33px;width:188px;height:1px;background:#e3e3e3;"></div>
<div style="position:absolute;left:606px;top:33px;width:1px;height:20px;background:#a0a0a0;"></div>
<div class="t" style="left:426.5px;top:34px;font-size:12px;line-height:14px;letter-spacing:0px;color:#000;transform:scaleX(0.917);transform-origin:0 0;">Параметры выбранного элемента</div>
<div style="position:absolute;left:419px;top:51px;width:187px;height:3px;background:#f0f0f0;"></div>
<div style="position:absolute;left:422px;top:55px;width:461px;height:596px;background:#ffffff;border-top:1px solid #a0a0a0;border-left:1px solid #a0a0a0;border-right:1px solid #ffffff;border-bottom:1px solid #ffffff;"></div>
<div style="position:absolute;left:423px;top:56px;width:459px;height:1px;background:#696969;"></div>
<div style="position:absolute;left:423px;top:56px;width:1px;height:594px;background:#696969;"></div>
<div style="position:absolute;left:881px;top:56px;width:1px;height:594px;background:#e3e3e3;"></div>
<div style="position:absolute;left:423px;top:649px;width:459px;height:1px;background:#e3e3e3;"></div>
<div style="position:absolute;left:424px;top:57px;width:231px;height:20px;background:#f0f0f0;border-top:1px solid #fff;border-left:1px solid #fff;border-right:1px solid #a0a0a0;"></div>
<div style="position:absolute;left:424px;top:77px;width:232px;height:1px;background:#000;"></div>
<div style="position:absolute;left:655px;top:57px;width:1px;height:21px;background:#000;"></div>
<div style="position:absolute;left:656px;top:77px;width:225px;height:1px;background:#c8c8c8;"></div>
<div class="t" style="left:426.0px;top:57px;font-size:14px;line-height:20px;letter-spacing:0.0px;color:#000;">Адрес</div>
<div style="position:absolute;left:656px;top:57px;width:225px;height:21px;background:#0078d7;"></div>
<div class="t" style="left:658px;top:57px;font-size:14px;line-height:20px;letter-spacing:0px;color:#fff;">1</div>
<div style="position:absolute;left:424px;top:78px;width:231px;height:20px;background:#f0f0f0;border-top:1px solid #fff;border-left:1px solid #fff;border-right:1px solid #a0a0a0;"></div>
<div style="position:absolute;left:424px;top:98px;width:232px;height:1px;background:#000;"></div>
<div style="position:absolute;left:655px;top:78px;width:1px;height:21px;background:#000;"></div>
<div style="position:absolute;left:656px;top:98px;width:225px;height:1px;background:#c8c8c8;"></div>
<div class="t" style="left:425.0px;top:78px;font-size:14px;line-height:20px;letter-spacing:0.182px;color:#000;">Наименование</div>
<div style="position:absolute;left:424px;top:99px;width:231px;height:20px;background:#f0f0f0;border-top:1px solid #fff;border-left:1px solid #fff;border-right:1px solid #a0a0a0;"></div>
<div style="position:absolute;left:424px;top:119px;width:232px;height:1px;background:#000;"></div>
<div style="position:absolute;left:655px;top:99px;width:1px;height:21px;background:#000;"></div>
<div style="position:absolute;left:656px;top:119px;width:225px;height:1px;background:#c8c8c8;"></div>
<div class="t" style="left:425.0px;top:99px;font-size:14px;line-height:20px;letter-spacing:0.167px;color:#000;">Нумерация элементов</div>
<div class="t" style="left:658.0999999999999px;top:99px;font-size:14px;line-height:20px;letter-spacing:-0.339px;color:#000;">- (SQ=1, где возм.)</div>
<div style="position:absolute;left:424px;top:120px;width:231px;height:20px;background:#f0f0f0;border-top:1px solid #fff;border-left:1px solid #fff;border-right:1px solid #a0a0a0;"></div>
<div style="position:absolute;left:424px;top:140px;width:232px;height:1px;background:#000;"></div>
<div style="position:absolute;left:655px;top:120px;width:1px;height:21px;background:#000;"></div>
<div style="position:absolute;left:656px;top:140px;width:225px;height:1px;background:#c8c8c8;"></div>
<div class="t" style="left:425.0px;top:120px;font-size:14px;line-height:20px;letter-spacing:0.143px;color:#000;">Передавать изм. флагов</div>
<div class="t" style="left:658.0999999999999px;top:120px;font-size:14px;line-height:20px;letter-spacing:0.0px;color:#000;">-</div>
<div class="t" style="left:667.9000000000001px;top:120px;font-size:14px;line-height:20px;letter-spacing:-0.04px;color:#000;">(без врем.)</div>
<div style="position:absolute;left:424px;top:141px;width:231px;height:20px;background:#f0f0f0;border-top:1px solid #fff;border-left:1px solid #fff;border-right:1px solid #a0a0a0;"></div>
<div style="position:absolute;left:424px;top:161px;width:232px;height:1px;background:#000;"></div>
<div style="position:absolute;left:655px;top:141px;width:1px;height:21px;background:#000;"></div>
<div style="position:absolute;left:656px;top:161px;width:225px;height:1px;background:#c8c8c8;"></div>
<div class="t" style="left:425.0px;top:141px;font-size:14px;line-height:20px;letter-spacing:0.072px;color:#000;">Передавать текстовые сообщения</div>
<div class="t" style="left:658.0999999999999px;top:141px;font-size:14px;line-height:20px;letter-spacing:0.0px;color:#000;">-</div>
<div class="t" style="left:667.9000000000001px;top:141px;font-size:14px;line-height:20px;letter-spacing:0.025px;color:#000;">(нет)</div>
<div style="position:absolute;left:424px;top:162px;width:231px;height:20px;background:#f0f0f0;border-top:1px solid #fff;border-left:1px solid #fff;border-right:1px solid #a0a0a0;"></div>
<div style="position:absolute;left:424px;top:182px;width:232px;height:1px;background:#000;"></div>
<div style="position:absolute;left:655px;top:162px;width:1px;height:21px;background:#000;"></div>
<div style="position:absolute;left:656px;top:182px;width:225px;height:1px;background:#c8c8c8;"></div>
<div class="t" style="left:426.0px;top:162px;font-size:14px;line-height:20px;letter-spacing:0.06px;color:#000;">Функции флагов SB/BL</div>
<div class="t" style="left:658.0999999999999px;top:162px;font-size:14px;line-height:20px;letter-spacing:-0.499px;color:#000;">0 (руч- &gt; SB+BL)</div>
<div style="position:absolute;left:424px;top:183px;width:231px;height:20px;background:#f0f0f0;border-top:1px solid #fff;border-left:1px solid #fff;border-right:1px solid #a0a0a0;"></div>
<div style="position:absolute;left:424px;top:203px;width:232px;height:1px;background:#000;"></div>
<div style="position:absolute;left:655px;top:183px;width:1px;height:21px;background:#000;"></div>
<div style="position:absolute;left:656px;top:203px;width:225px;height:1px;background:#c8c8c8;"></div>
<div class="t" style="left:425.0px;top:183px;font-size:14px;line-height:20px;letter-spacing:0.112px;color:#000;">Передавать бит SB</div>
<div class="t" style="left:658.0999999999999px;top:183px;font-size:14px;line-height:20px;letter-spacing:-0.5px;color:#000;">+ (да)</div>
<div style="position:absolute;left:424px;top:204px;width:231px;height:20px;background:#f0f0f0;border-top:1px solid #fff;border-left:1px solid #fff;border-right:1px solid #a0a0a0;"></div>
<div style="position:absolute;left:424px;top:224px;width:232px;height:1px;background:#000;"></div>
<div style="position:absolute;left:655px;top:204px;width:1px;height:21px;background:#000;"></div>
<div style="position:absolute;left:656px;top:224px;width:225px;height:1px;background:#c8c8c8;"></div>
<div class="t" style="left:425.0px;top:204px;font-size:14px;line-height:20px;letter-spacing:0.103px;color:#000;">Приоритет общего опроса</div>
<div class="t" style="left:658.0999999999999px;top:204px;font-size:14px;line-height:20px;letter-spacing:-0.265px;color:#000;">+ (выше спорадики)</div>
<div style="position:absolute;left:424px;top:225px;width:231px;height:20px;background:#f0f0f0;border-top:1px solid #fff;border-left:1px solid #fff;border-right:1px solid #a0a0a0;"></div>
<div style="position:absolute;left:424px;top:245px;width:232px;height:1px;background:#000;"></div>
<div style="position:absolute;left:655px;top:225px;width:1px;height:21px;background:#000;"></div>
<div style="position:absolute;left:656px;top:245px;width:225px;height:1px;background:#c8c8c8;"></div>
<div class="t" style="left:425.0px;top:225px;font-size:14px;line-height:20px;letter-spacing:0.22px;color:#000;">Передача ТС</div>
<div style="position:absolute;left:424px;top:246px;width:231px;height:20px;background:#f0f0f0;border-top:1px solid #fff;border-left:1px solid #fff;border-right:1px solid #a0a0a0;"></div>
<div style="position:absolute;left:424px;top:266px;width:232px;height:1px;background:#000;"></div>
<div style="position:absolute;left:655px;top:246px;width:1px;height:21px;background:#000;"></div>
<div style="position:absolute;left:656px;top:266px;width:225px;height:1px;background:#c8c8c8;"></div>
<div class="t" style="left:425.0px;top:246px;font-size:14px;line-height:20px;letter-spacing:0.32px;color:#000;">циклическая</div>
<div class="t" style="left:657.5999999999999px;top:246px;font-size:14px;line-height:20px;letter-spacing:-0.435px;color:#000;">1 (мин)</div>
<div style="position:absolute;left:424px;top:267px;width:231px;height:20px;background:#f0f0f0;border-top:1px solid #fff;border-left:1px solid #fff;border-right:1px solid #a0a0a0;"></div>
<div style="position:absolute;left:424px;top:287px;width:232px;height:1px;background:#000;"></div>
<div style="position:absolute;left:655px;top:267px;width:1px;height:21px;background:#000;"></div>
<div style="position:absolute;left:656px;top:287px;width:225px;height:1px;background:#c8c8c8;"></div>
<div class="t" style="left:426.0px;top:267px;font-size:14px;line-height:20px;letter-spacing:0.15px;color:#000;">– с</div>
<div class="t" style="left:450.0px;top:267px;font-size:14px;line-height:20px;letter-spacing:0.065px;color:#000;">временем</div>
<div class="t" style="left:658.0999999999999px;top:267px;font-size:14px;line-height:20px;letter-spacing:0.0px;color:#000;">-</div>
<div class="t" style="left:667.9000000000001px;top:267px;font-size:14px;line-height:20px;letter-spacing:0.025px;color:#000;">(нет)</div>
<div style="position:absolute;left:424px;top:288px;width:231px;height:20px;background:#f0f0f0;border-top:1px solid #fff;border-left:1px solid #fff;border-right:1px solid #a0a0a0;"></div>
<div style="position:absolute;left:424px;top:308px;width:232px;height:1px;background:#000;"></div>
<div style="position:absolute;left:655px;top:288px;width:1px;height:21px;background:#000;"></div>
<div style="position:absolute;left:656px;top:308px;width:225px;height:1px;background:#c8c8c8;"></div>
<div class="t" style="left:426.0px;top:288px;font-size:14px;line-height:20px;letter-spacing:0.196px;color:#000;">спорадическая</div>
<div class="t" style="left:658.0999999999999px;top:288px;font-size:14px;line-height:20px;letter-spacing:-0.429px;color:#000;">+ (есть)</div>
<div style="position:absolute;left:424px;top:309px;width:231px;height:20px;background:#f0f0f0;border-top:1px solid #fff;border-left:1px solid #fff;border-right:1px solid #a0a0a0;"></div>
<div style="position:absolute;left:424px;top:329px;width:232px;height:1px;background:#000;"></div>
<div style="position:absolute;left:655px;top:309px;width:1px;height:21px;background:#000;"></div>
<div style="position:absolute;left:656px;top:329px;width:225px;height:1px;background:#c8c8c8;"></div>
<div class="t" style="left:426.0px;top:309px;font-size:14px;line-height:20px;letter-spacing:0.15px;color:#000;">– с</div>
<div class="t" style="left:450.0px;top:309px;font-size:14px;line-height:20px;letter-spacing:0.065px;color:#000;">временем</div>
<div class="t" style="left:658.0999999999999px;top:309px;font-size:14px;line-height:20px;letter-spacing:-0.5px;color:#000;">+ (да)</div>
<div style="position:absolute;left:424px;top:330px;width:231px;height:20px;background:#f0f0f0;border-top:1px solid #fff;border-left:1px solid #fff;border-right:1px solid #a0a0a0;"></div>
<div style="position:absolute;left:424px;top:350px;width:232px;height:1px;background:#000;"></div>
<div style="position:absolute;left:655px;top:330px;width:1px;height:21px;background:#000;"></div>
<div style="position:absolute;left:656px;top:350px;width:225px;height:1px;background:#c8c8c8;"></div>
<div class="t" style="left:425.0px;top:330px;font-size:14px;line-height:20px;letter-spacing:0.251px;color:#000;">Передача ТИТ</div>
<div style="position:absolute;left:424px;top:351px;width:231px;height:20px;background:#f0f0f0;border-top:1px solid #fff;border-left:1px solid #fff;border-right:1px solid #a0a0a0;"></div>
<div style="position:absolute;left:424px;top:371px;width:232px;height:1px;background:#000;"></div>
<div style="position:absolute;left:655px;top:351px;width:1px;height:21px;background:#000;"></div>
<div style="position:absolute;left:656px;top:371px;width:225px;height:1px;background:#c8c8c8;"></div>
<div class="t" style="left:425.0px;top:351px;font-size:14px;line-height:20px;letter-spacing:0.32px;color:#000;">циклическая</div>
<div class="t" style="left:658.0999999999999px;top:351px;font-size:14px;line-height:20px;letter-spacing:0.0px;color:#000;">-</div>
<div class="t" style="left:667.9000000000001px;top:351px;font-size:14px;line-height:20px;letter-spacing:0.11px;color:#000;">(нет цикла)</div>
<div style="position:absolute;left:424px;top:372px;width:231px;height:20px;background:#f0f0f0;border-top:1px solid #fff;border-left:1px solid #fff;border-right:1px solid #a0a0a0;"></div>
<div style="position:absolute;left:424px;top:392px;width:232px;height:1px;background:#000;"></div>
<div style="position:absolute;left:655px;top:372px;width:1px;height:21px;background:#000;"></div>
<div style="position:absolute;left:656px;top:392px;width:225px;height:1px;background:#c8c8c8;"></div>
<div class="t" style="left:426.0px;top:372px;font-size:14px;line-height:20px;letter-spacing:0.15px;color:#000;">– с</div>
<div class="t" style="left:450.0px;top:372px;font-size:14px;line-height:20px;letter-spacing:0.065px;color:#000;">временем</div>
<div class="t" style="left:658.0999999999999px;top:372px;font-size:14px;line-height:20px;letter-spacing:0.0px;color:#000;">-</div>
<div class="t" style="left:667.9000000000001px;top:372px;font-size:14px;line-height:20px;letter-spacing:0.025px;color:#000;">(нет)</div>
<div style="position:absolute;left:424px;top:393px;width:231px;height:20px;background:#f0f0f0;border-top:1px solid #fff;border-left:1px solid #fff;border-right:1px solid #a0a0a0;"></div>
<div style="position:absolute;left:424px;top:413px;width:232px;height:1px;background:#000;"></div>
<div style="position:absolute;left:655px;top:393px;width:1px;height:21px;background:#000;"></div>
<div style="position:absolute;left:656px;top:413px;width:225px;height:1px;background:#c8c8c8;"></div>
<div class="t" style="left:426.0px;top:393px;font-size:14px;line-height:20px;letter-spacing:0.145px;color:#000;">– усреднение</div>
<div class="t" style="left:658.0999999999999px;top:393px;font-size:14px;line-height:20px;letter-spacing:0.0px;color:#000;">-</div>
<div class="t" style="left:667.9000000000001px;top:393px;font-size:14px;line-height:20px;letter-spacing:0.025px;color:#000;">(нет)</div>
<div style="position:absolute;left:424px;top:414px;width:231px;height:20px;background:#f0f0f0;border-top:1px solid #fff;border-left:1px solid #fff;border-right:1px solid #a0a0a0;"></div>
<div style="position:absolute;left:424px;top:434px;width:232px;height:1px;background:#000;"></div>
<div style="position:absolute;left:655px;top:414px;width:1px;height:21px;background:#000;"></div>
<div style="position:absolute;left:656px;top:434px;width:225px;height:1px;background:#c8c8c8;"></div>
<div class="t" style="left:426.0px;top:414px;font-size:14px;line-height:20px;letter-spacing:0.196px;color:#000;">спорадическая</div>
<div class="t" style="left:658.0999999999999px;top:414px;font-size:14px;line-height:20px;letter-spacing:0.0px;color:#000;">-</div>
<div class="t" style="left:667.9000000000001px;top:414px;font-size:14px;line-height:20px;letter-spacing:0.025px;color:#000;">(нет)</div>
<div style="position:absolute;left:424px;top:435px;width:231px;height:20px;background:#f0f0f0;border-top:1px solid #fff;border-left:1px solid #fff;border-right:1px solid #a0a0a0;"></div>
<div style="position:absolute;left:424px;top:455px;width:232px;height:1px;background:#000;"></div>
<div style="position:absolute;left:655px;top:435px;width:1px;height:21px;background:#000;"></div>
<div style="position:absolute;left:656px;top:455px;width:225px;height:1px;background:#c8c8c8;"></div>
<div class="t" style="left:426.0px;top:435px;font-size:14px;line-height:20px;letter-spacing:0.15px;color:#000;">– с</div>
<div class="t" style="left:450.0px;top:435px;font-size:14px;line-height:20px;letter-spacing:0.065px;color:#000;">временем</div>
<div class="t" style="left:658.0999999999999px;top:435px;font-size:14px;line-height:20px;letter-spacing:0.0px;color:#000;">-</div>
<div class="t" style="left:667.9000000000001px;top:435px;font-size:14px;line-height:20px;letter-spacing:0.025px;color:#000;">(нет)</div>
<div style="position:absolute;left:424px;top:456px;width:231px;height:20px;background:#f0f0f0;border-top:1px solid #fff;border-left:1px solid #fff;border-right:1px solid #a0a0a0;"></div>
<div style="position:absolute;left:424px;top:476px;width:232px;height:1px;background:#000;"></div>
<div style="position:absolute;left:655px;top:456px;width:1px;height:21px;background:#000;"></div>
<div style="position:absolute;left:656px;top:476px;width:225px;height:1px;background:#c8c8c8;"></div>
<div class="t" style="left:425.0px;top:456px;font-size:14px;line-height:20px;letter-spacing:0.272px;color:#000;">Передача ТИИ</div>
<div style="position:absolute;left:424px;top:477px;width:231px;height:20px;background:#f0f0f0;border-top:1px solid #fff;border-left:1px solid #fff;border-right:1px solid #a0a0a0;"></div>
<div style="position:absolute;left:424px;top:497px;width:232px;height:1px;background:#000;"></div>
<div style="position:absolute;left:655px;top:477px;width:1px;height:21px;background:#000;"></div>
<div style="position:absolute;left:656px;top:497px;width:225px;height:1px;background:#c8c8c8;"></div>
<div class="t" style="left:425.0px;top:477px;font-size:14px;line-height:20px;letter-spacing:0.32px;color:#000;">циклическая</div>
<div class="t" style="left:658.0999999999999px;top:477px;font-size:14px;line-height:20px;letter-spacing:0.0px;color:#000;">-</div>
<div class="t" style="left:667.9000000000001px;top:477px;font-size:14px;line-height:20px;letter-spacing:0.11px;color:#000;">(нет цикла)</div>
<div style="position:absolute;left:424px;top:498px;width:231px;height:20px;background:#f0f0f0;border-top:1px solid #fff;border-left:1px solid #fff;border-right:1px solid #a0a0a0;"></div>
<div style="position:absolute;left:424px;top:518px;width:232px;height:1px;background:#000;"></div>
<div style="position:absolute;left:655px;top:498px;width:1px;height:21px;background:#000;"></div>
<div style="position:absolute;left:656px;top:518px;width:225px;height:1px;background:#c8c8c8;"></div>
<div class="t" style="left:426.0px;top:498px;font-size:14px;line-height:20px;letter-spacing:0.15px;color:#000;">– с</div>
<div class="t" style="left:450.0px;top:498px;font-size:14px;line-height:20px;letter-spacing:0.065px;color:#000;">временем</div>
<div class="t" style="left:658.0999999999999px;top:498px;font-size:14px;line-height:20px;letter-spacing:0.0px;color:#000;">-</div>
<div class="t" style="left:667.9000000000001px;top:498px;font-size:14px;line-height:20px;letter-spacing:0.025px;color:#000;">(нет)</div>
<div style="position:absolute;left:424px;top:519px;width:231px;height:20px;background:#f0f0f0;border-top:1px solid #fff;border-left:1px solid #fff;border-right:1px solid #a0a0a0;"></div>
<div style="position:absolute;left:424px;top:539px;width:232px;height:1px;background:#000;"></div>
<div style="position:absolute;left:655px;top:519px;width:1px;height:21px;background:#000;"></div>
<div style="position:absolute;left:656px;top:539px;width:225px;height:1px;background:#c8c8c8;"></div>
<div class="t" style="left:426.0px;top:519px;font-size:14px;line-height:20px;letter-spacing:0.196px;color:#000;">спорадическая</div>
<div class="t" style="left:658.0999999999999px;top:519px;font-size:14px;line-height:20px;letter-spacing:0.0px;color:#000;">-</div>
<div class="t" style="left:667.9000000000001px;top:519px;font-size:14px;line-height:20px;letter-spacing:0.025px;color:#000;">(нет)</div>
<div style="position:absolute;left:424px;top:540px;width:231px;height:20px;background:#f0f0f0;border-top:1px solid #fff;border-left:1px solid #fff;border-right:1px solid #a0a0a0;"></div>
<div style="position:absolute;left:424px;top:560px;width:232px;height:1px;background:#000;"></div>
<div style="position:absolute;left:655px;top:540px;width:1px;height:21px;background:#000;"></div>
<div style="position:absolute;left:656px;top:560px;width:225px;height:1px;background:#c8c8c8;"></div>
<div class="t" style="left:426.0px;top:540px;font-size:14px;line-height:20px;letter-spacing:0.15px;color:#000;">– с</div>
<div class="t" style="left:450.0px;top:540px;font-size:14px;line-height:20px;letter-spacing:0.065px;color:#000;">временем</div>
<div class="t" style="left:658.0999999999999px;top:540px;font-size:14px;line-height:20px;letter-spacing:0.0px;color:#000;">-</div>
<div class="t" style="left:667.9000000000001px;top:540px;font-size:14px;line-height:20px;letter-spacing:0.025px;color:#000;">(нет)</div>
<div style="position:absolute;left:424px;top:561px;width:231px;height:20px;background:#f0f0f0;border-top:1px solid #fff;border-left:1px solid #fff;border-right:1px solid #a0a0a0;"></div>
<div style="position:absolute;left:424px;top:581px;width:232px;height:1px;background:#000;"></div>
<div style="position:absolute;left:655px;top:561px;width:1px;height:21px;background:#000;"></div>
<div style="position:absolute;left:656px;top:581px;width:225px;height:1px;background:#c8c8c8;"></div>
<div style="position:absolute;left:426px;top:571px;width:185px;height:1px;background:#000;"></div>
<div style="position:absolute;left:424px;top:582px;width:231px;height:20px;background:#f0f0f0;border-top:1px solid #fff;border-left:1px solid #fff;border-right:1px solid #a0a0a0;"></div>
<div style="position:absolute;left:424px;top:602px;width:232px;height:1px;background:#000;"></div>
<div style="position:absolute;left:655px;top:582px;width:1px;height:21px;background:#000;"></div>
<div style="position:absolute;left:656px;top:602px;width:225px;height:1px;background:#c8c8c8;"></div>
<div class="t" style="left:426.0px;top:582px;font-size:14px;line-height:20px;letter-spacing:-0.105px;color:#000;">Символьное имя (тэг)</div>
<div style="position:absolute;left:424px;top:603px;width:231px;height:20px;background:#f0f0f0;border-top:1px solid #fff;border-left:1px solid #fff;border-right:1px solid #a0a0a0;"></div>
<div style="position:absolute;left:424px;top:623px;width:232px;height:1px;background:#000;"></div>
<div style="position:absolute;left:655px;top:603px;width:1px;height:21px;background:#000;"></div>
<div style="position:absolute;left:656px;top:623px;width:225px;height:1px;background:#c8c8c8;"></div>
<div class="t" style="left:425.0px;top:603px;font-size:14px;line-height:20px;letter-spacing:0.1px;color:#000;">Время последнего изменения</div>
<div class="t" style="left:657.5999999999999px;top:603px;font-size:14px;line-height:20px;letter-spacing:-0.797px;color:#0000ff;">21.01.2019 15:17:16</div>
<div style="position:absolute;left:424px;top:624px;width:231px;height:20px;background:#f0f0f0;border-top:1px solid #fff;border-left:1px solid #fff;border-right:1px solid #a0a0a0;"></div>
<div style="position:absolute;left:424px;top:644px;width:232px;height:1px;background:#000;"></div>
<div style="position:absolute;left:655px;top:624px;width:1px;height:21px;background:#000;"></div>
<div style="position:absolute;left:656px;top:644px;width:225px;height:1px;background:#c8c8c8;"></div>
<div class="t" style="left:425.0px;top:624px;font-size:14px;line-height:20px;letter-spacing:0.418px;color:#000;">Пользователь</div>
<div class="t" style="left:658.0999999999999px;top:624px;font-size:14px;line-height:20px;letter-spacing:-0.214px;color:#0000ff;">ANDYUS\AS</div>
<div style="position:absolute;left:514px;top:661px;width:30px;height:28px;background:#f0f0f0;border-top:1px solid #fff;border-left:1px solid #fff;border-right:1px solid #696969;border-bottom:1px solid #696969;"></div>
<div style="position:absolute;left:515px;top:687px;width:28px;height:1px;background:#a0a0a0;"></div>
<div style="position:absolute;left:542px;top:662px;width:1px;height:26px;background:#a0a0a0;"></div>
<div class="t" style="left:524.5px;top:665.5px;font-size:18.5px;line-height:20px;letter-spacing:0px;color:#000;font-weight:bold;font-family:'Liberation Serif',serif;transform:scaleX(0.85);transform-origin:left top;">A</div>
<div style="position:absolute;left:550px;top:661px;width:105px;height:28px;background:#f0f0f0;border-top:1px solid #fff;border-left:1px solid #fff;border-right:1px solid #696969;border-bottom:1px solid #696969;"></div>
<div style="position:absolute;left:551px;top:687px;width:103px;height:1px;background:#a0a0a0;"></div>
<div style="position:absolute;left:653px;top:662px;width:1px;height:26px;background:#a0a0a0;"></div>
<div style="position:absolute;left:659px;top:661px;width:104px;height:28px;background:#f0f0f0;border-top:1px solid #fff;border-left:1px solid #fff;border-right:1px solid #696969;border-bottom:1px solid #696969;"></div>
<div style="position:absolute;left:660px;top:687px;width:102px;height:1px;background:#a0a0a0;"></div>
<div style="position:absolute;left:761px;top:662px;width:1px;height:26px;background:#a0a0a0;"></div>
<div style="position:absolute;left:768px;top:661px;width:104px;height:28px;background:#f0f0f0;border:1px solid #696969;"></div>
<div style="position:absolute;left:769px;top:662px;width:102px;height:26px;background:#f0f0f0;border-top:1px solid #fff;border-left:1px solid #fff;border-right:1px solid #696969;border-bottom:1px solid #696969;"></div>
<div style="position:absolute;left:770px;top:686px;width:100px;height:1px;background:#a0a0a0;"></div>
<div style="position:absolute;left:869px;top:663px;width:1px;height:24px;background:#a0a0a0;"></div>
<div class="t" style="left:579.5px;top:667.5px;font-size:13px;line-height:15px;letter-spacing:0px;color:#000;transform:scaleX(0.84);transform-origin:0 0;">Восстановить</div>
<div class="t" style="left:697px;top:667.5px;font-size:13px;line-height:15px;letter-spacing:0px;color:#000;transform:scaleX(0.825);transform-origin:0 0;">Сохранить</div>
<div class="t" style="left:804px;top:667.5px;font-size:13px;line-height:15px;letter-spacing:0px;color:#000;transform:scaleX(0.84);transform-origin:0 0;">Выход</div>
<svg style="left:554px;top:664px" width="22" height="20" shape-rendering="crispEdges"><rect x="12" y="2" width="6" height="1" fill="#000000"/><rect x="12" y="3" width="1" height="1" fill="#000000"/><rect x="13" y="3" width="4" height="1" fill="#ffffff"/><rect x="17" y="3" width="2" height="1" fill="#000000"/><rect x="8" y="4" width="1" height="1" fill="#000000"/><rect x="12" y="4" width="1" height="1" fill="#000000"/><rect x="13" y="4" width="1" height="1" fill="#ffffff"/><rect x="14" y="4" width="2" height="1" fill="#0000ff"/><rect x="16" y="4" width="1" height="1" fill="#ffffff"/><rect x="17" y="4" width="3" height="1" fill="#000000"/><rect x="8" y="5" width="2" height="1" fill="#000000"/><rect x="12" y="5" width="1" height="1" fill="#000000"/><rect x="13" y="5" width="6" height="1" fill="#ffffff"/><rect x="19" y="5" width="1" height="1" fill="#000000"/><rect x="6" y="6" width="5" height="1" fill="#000000"/><rect x="12" y="6" width="1" height="1" fill="#000000"/><rect x="13" y="6" width="1" height="1" fill="#ffffff"/><rect x="14" y="6" width="4" height="1" fill="#0000ff"/><rect x="18" y="6" width="1" height="1" fill="#ffffff"/><rect x="19" y="6" width="1" height="1" fill="#000000"/><rect x="5" y="7" width="6" height="1" fill="#000000"/><rect x="12" y="7" width="1" height="1" fill="#000000"/><rect x="13" y="7" width="6" height="1" fill="#ffffff"/><rect x="19" y="7" width="1" height="1" fill="#000000"/><rect x="4" y="8" width="2" height="1" fill="#000000"/><rect x="8" y="8" width="2" height="1" fill="#000000"/><rect x="12" y="8" width="1" height="1" fill="#000000"/><rect x="13" y="8" width="1" height="1" fill="#ffffff"/><rect x="14" y="8" width="4" height="1" fill="#0000ff"/><rect x="18" y="8" width="1" height="1" fill="#ffffff"/><rect x="19" y="8" width="1" height="1" fill="#000000"/><rect x="4" y="9" width="2" height="1" fill="#000000"/><rect x="8" y="9" width="1" height="1" fill="#000000"/><rect x="12" y="9" width="1" height="1" fill="#000000"/><rect x="13" y="9" width="6" height="1" fill="#ffffff"/><rect x="19" y="9" width="1" height="1" fill="#000000"/><rect x="4" y="10" width="2" height="1" fill="#000000"/><rect x="12" y="10" width="8" height="1" fill="#000000"/><rect x="4" y="11" width="2" height="1" fill="#000000"/><rect x="4" y="12" width="2" height="1" fill="#000000"/><rect x="2" y="14" width="13" height="1" fill="#000000"/><rect x="2" y="15" width="1" height="1" fill="#000000"/><rect x="3" y="15" width="11" height="1" fill="#ffffff"/><rect x="14" y="15" width="1" height="1" fill="#000000"/><rect x="2" y="16" width="1" height="1" fill="#000000"/><rect x="3" y="16" width="1" height="1" fill="#ffffff"/><rect x="4" y="16" width="2" height="1" fill="#ff0000"/><rect x="6" y="16" width="7" height="1" fill="#c0c0c0"/><rect x="13" y="16" width="1" height="1" fill="#808080"/><rect x="14" y="16" width="1" height="1" fill="#000000"/><rect x="2" y="17" width="1" height="1" fill="#000000"/><rect x="3" y="17" width="1" height="1" fill="#ffffff"/><rect x="4" y="17" width="8" height="1" fill="#c0c0c0"/><rect x="12" y="17" width="2" height="1" fill="#808080"/><rect x="14" y="17" width="1" height="1" fill="#000000"/><rect x="2" y="18" width="1" height="1" fill="#000000"/><rect x="3" y="18" width="1" height="1" fill="#ffffff"/><rect x="4" y="18" width="10" height="1" fill="#808080"/><rect x="14" y="18" width="1" height="1" fill="#000000"/><rect x="2" y="19" width="13" height="1" fill="#000000"/></svg>
<svg style="left:672px;top:664px" width="22" height="20" shape-rendering="crispEdges"><rect x="2" y="2" width="6" height="1" fill="#000000"/><rect x="2" y="3" width="1" height="1" fill="#000000"/><rect x="3" y="3" width="4" height="1" fill="#ffffff"/><rect x="7" y="3" width="2" height="1" fill="#000000"/><rect x="2" y="4" width="1" height="1" fill="#000000"/><rect x="3" y="4" width="1" height="1" fill="#ffffff"/><rect x="4" y="4" width="2" height="1" fill="#0000ff"/><rect x="6" y="4" width="1" height="1" fill="#ffffff"/><rect x="7" y="4" width="3" height="1" fill="#000000"/><rect x="2" y="5" width="1" height="1" fill="#000000"/><rect x="3" y="5" width="6" height="1" fill="#ffffff"/><rect x="9" y="5" width="1" height="1" fill="#000000"/><rect x="11" y="5" width="5" height="1" fill="#000000"/><rect x="2" y="6" width="1" height="1" fill="#000000"/><rect x="3" y="6" width="1" height="1" fill="#ffffff"/><rect x="4" y="6" width="4" height="1" fill="#0000ff"/><rect x="8" y="6" width="1" height="1" fill="#ffffff"/><rect x="9" y="6" width="1" height="1" fill="#000000"/><rect x="11" y="6" width="6" height="1" fill="#000000"/><rect x="2" y="7" width="1" height="1" fill="#000000"/><rect x="3" y="7" width="6" height="1" fill="#ffffff"/><rect x="9" y="7" width="1" height="1" fill="#000000"/><rect x="15" y="7" width="2" height="1" fill="#000000"/><rect x="2" y="8" width="1" height="1" fill="#000000"/><rect x="3" y="8" width="1" height="1" fill="#ffffff"/><rect x="4" y="8" width="4" height="1" fill="#0000ff"/><rect x="8" y="8" width="1" height="1" fill="#ffffff"/><rect x="9" y="8" width="1" height="1" fill="#000000"/><rect x="15" y="8" width="2" height="1" fill="#000000"/><rect x="2" y="9" width="1" height="1" fill="#000000"/><rect x="3" y="9" width="6" height="1" fill="#ffffff"/><rect x="9" y="9" width="1" height="1" fill="#000000"/><rect x="15" y="9" width="2" height="1" fill="#000000"/><rect x="2" y="10" width="8" height="1" fill="#000000"/><rect x="13" y="10" width="6" height="1" fill="#000000"/><rect x="14" y="11" width="4" height="1" fill="#000000"/><rect x="15" y="12" width="2" height="1" fill="#000000"/><rect x="7" y="14" width="13" height="1" fill="#000000"/><rect x="7" y="15" width="1" height="1" fill="#000000"/><rect x="8" y="15" width="11" height="1" fill="#ffffff"/><rect x="19" y="15" width="1" height="1" fill="#000000"/><rect x="7" y="16" width="1" height="1" fill="#000000"/><rect x="8" y="16" width="1" height="1" fill="#ffffff"/><rect x="9" y="16" width="2" height="1" fill="#ff0000"/><rect x="11" y="16" width="7" height="1" fill="#c0c0c0"/><rect x="18" y="16" width="1" height="1" fill="#808080"/><rect x="19" y="16" width="1" height="1" fill="#000000"/><rect x="7" y="17" width="1" height="1" fill="#000000"/><rect x="8" y="17" width="1" height="1" fill="#ffffff"/><rect x="9" y="17" width="8" height="1" fill="#c0c0c0"/><rect x="17" y="17" width="2" height="1" fill="#808080"/><rect x="19" y="17" width="1" height="1" fill="#000000"/><rect x="7" y="18" width="1" height="1" fill="#000000"/><rect x="8" y="18" width="1" height="1" fill="#ffffff"/><rect x="9" y="18" width="10" height="1" fill="#808080"/><rect x="19" y="18" width="1" height="1" fill="#000000"/><rect x="7" y="19" width="13" height="1" fill="#000000"/></svg>
</body></html>
